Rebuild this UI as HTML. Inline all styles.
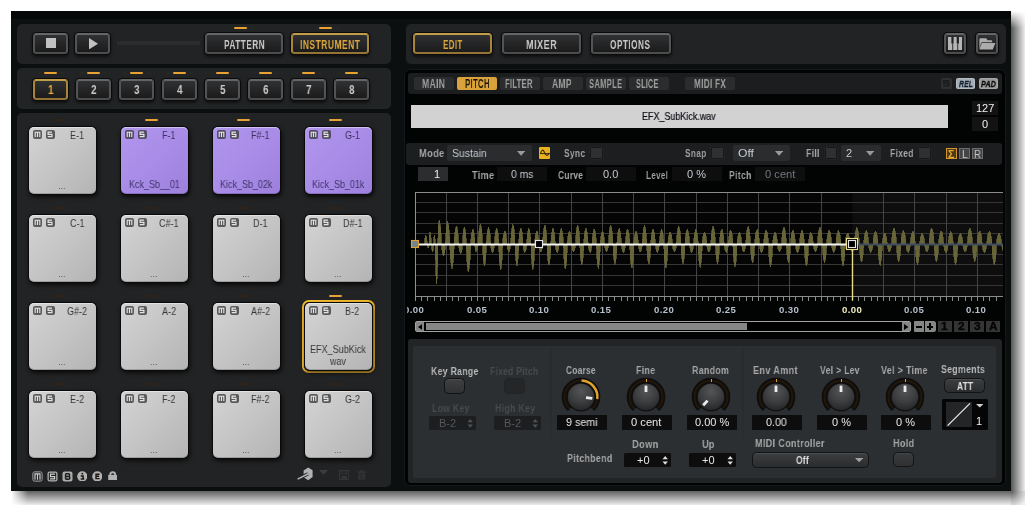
<!DOCTYPE html>
<html><head><meta charset="utf-8"><title>UI</title>
<style>
html,body{margin:0;padding:0;background:#fff;}
body{width:1034px;height:514px;position:relative;overflow:hidden;font-family:"Liberation Sans",sans-serif;}
div,span.t,svg{position:absolute;box-sizing:border-box;}
span.t{white-space:nowrap;transform-origin:0 50%;display:block;will-change:transform;}
.win{background:#0c0f10;}
.pan{background:#222324;border-radius:5px;}
.btn{border-radius:3.5px;border:2px solid #535455;border-top-color:#646566;background:linear-gradient(#303132,#1b1b1c);box-shadow:0 0 0 1px #0b0b0b,0 2px 3px 1px rgba(0,0,0,.55);}
.btn{border-bottom-color:#4b4c4d;}
.btn.on{border-color:#a9853a;border-top-color:#c19c49;border-bottom-color:#937434;}
.pad{border-radius:5px;background:linear-gradient(135deg,#d4d4d4 0%,#c6c6c6 45%,#b4b4b4 100%);box-shadow:0 0 0 1px #0a0a0a,1px 2px 4px 1px rgba(0,0,0,.7),inset 0 1px 0 rgba(255,255,255,.45),inset 0 -1px 0 rgba(0,0,0,.18);}
.pad.pu{background:linear-gradient(135deg,#b196ee 0%,#a88ce7 50%,#9c80dc 100%);}
.ms{background:rgba(58,58,60,.78);border-radius:2px;}
.ind{height:2px;border-radius:1px;background:#2e2316;}
.ind.on{background:#e9a132;}
.tab{background:#2b2c2d;border-radius:2px;}
.tab.on{background:#d9a23a;}
.val{background:#0e0e0e;}
.chk{background:#2f3031;border:1px solid #161718;border-radius:1.5px;box-shadow:0 0 0 0.5px rgba(60,62,64,.35);}

</style></head>
<body>
<div style="left:1011.0px;top:11.0px;width:14.0px;height:480.0px;background:linear-gradient(to right,rgba(0,0,0,.66),rgba(0,0,0,.07));-webkit-mask-image:linear-gradient(to bottom,transparent 0,#000 17px);mask-image:linear-gradient(to bottom,transparent 0,#000 17px);"></div>
<div style="left:11.0px;top:491.0px;width:1000.0px;height:14.0px;background:linear-gradient(to bottom,rgba(0,0,0,.62),rgba(0,0,0,.07));-webkit-mask-image:linear-gradient(to right,transparent 0,#000 17px);mask-image:linear-gradient(to right,transparent 0,#000 17px);"></div>
<div style="left:1011.0px;top:491.0px;width:14.0px;height:14.0px;background:radial-gradient(circle at 0 0,rgba(0,0,0,.64) 0,rgba(0,0,0,.3) 9px,rgba(0,0,0,.07) 17px);"></div>
<div class="win" style="left:11.0px;top:11.0px;width:1000.0px;height:480.0px;"></div>
<div style="left:11.0px;top:11.0px;width:1000.0px;height:7.6px;background:#050708;"></div>
<div class="pan" style="left:17.3px;top:24.0px;width:373.7px;height:39.7px;"></div>
<div class="pan" style="left:17.3px;top:68.0px;width:373.7px;height:40.8px;"></div>
<div class="pan" style="left:17.3px;top:113.3px;width:373.7px;height:374.0px;"></div>
<div class="pan" style="left:406.0px;top:24.0px;width:600.2px;height:39.7px;"></div>
<div class="btn" style="left:33.0px;top:32.6px;width:35.0px;height:21.4px;"></div>
<div style="left:46.0px;top:38.0px;width:10.2px;height:10.2px;background:#c2c2c2;"></div>
<div class="btn" style="left:74.8px;top:32.6px;width:35.3px;height:21.4px;"></div>
<svg style="left:88.5px;top:38px" width="9" height="11.4"><polygon points="0,0 9,5.7 0,11.4" fill="#c2c2c2"/></svg>
<div style="left:117.0px;top:41.0px;width:83.0px;height:4.2px;background:#2b2c2d;"></div>
<div class="btn" style="left:204.7px;top:32.6px;width:78.5px;height:21.4px;"></div>
<span class="t" style="left:223.70px;top:35.50px;font-size:13px;line-height:17px;color:#c9c9c9;font-weight:bold;transform:scaleX(0.633);letter-spacing:0.8px;">PATTERN</span>
<div class="btn on" style="left:290.7px;top:32.6px;width:78.6px;height:21.4px;"></div>
<span class="t" style="left:299.80px;top:35.50px;font-size:13px;line-height:17px;color:#dba63c;font-weight:bold;transform:scaleX(0.648);letter-spacing:0.8px;">INSTRUMENT</span>
<div class="ind on" style="left:233.5px;top:27.0px;width:13.6px;height:2.0px;"></div>
<div style="left:250.9px;top:27.2px;width:4.0px;height:1.6px;background:#26291b;border-radius:1px;"></div>
<div class="ind on" style="left:318.7px;top:27.0px;width:13.6px;height:2.0px;"></div>
<div style="left:336.1px;top:27.2px;width:4.0px;height:1.6px;background:#26291b;border-radius:1px;"></div>
<div class="btn on" style="left:33.0px;top:79.0px;width:35.2px;height:21.2px;"></div>
<span class="t" style="left:47.80px;top:81.80px;font-size:12px;line-height:16px;color:#e8ab3a;font-weight:bold;transform:scaleX(0.837);">1</span>
<div class="ind on" style="left:44.0px;top:72.0px;width:13.2px;height:2.0px;"></div>
<div style="left:37.0px;top:72.2px;width:3.8px;height:1.6px;background:#26291b;border-radius:1px;"></div>
<div style="left:60.4px;top:72.2px;width:3.8px;height:1.6px;background:#26291b;border-radius:1px;"></div>
<div class="btn" style="left:76.0px;top:79.0px;width:35.2px;height:21.2px;"></div>
<span class="t" style="left:90.80px;top:81.80px;font-size:12px;line-height:16px;color:#c9c9c9;font-weight:bold;transform:scaleX(0.837);">2</span>
<div class="ind on" style="left:87.0px;top:72.0px;width:13.2px;height:2.0px;"></div>
<div style="left:80.0px;top:72.2px;width:3.8px;height:1.6px;background:#26291b;border-radius:1px;"></div>
<div style="left:103.4px;top:72.2px;width:3.8px;height:1.6px;background:#26291b;border-radius:1px;"></div>
<div class="btn" style="left:119.0px;top:79.0px;width:35.2px;height:21.2px;"></div>
<span class="t" style="left:133.80px;top:81.80px;font-size:12px;line-height:16px;color:#c9c9c9;font-weight:bold;transform:scaleX(0.837);">3</span>
<div class="ind on" style="left:130.0px;top:72.0px;width:13.2px;height:2.0px;"></div>
<div style="left:123.0px;top:72.2px;width:3.8px;height:1.6px;background:#26291b;border-radius:1px;"></div>
<div style="left:146.4px;top:72.2px;width:3.8px;height:1.6px;background:#26291b;border-radius:1px;"></div>
<div class="btn" style="left:162.0px;top:79.0px;width:35.2px;height:21.2px;"></div>
<span class="t" style="left:176.80px;top:81.80px;font-size:12px;line-height:16px;color:#c9c9c9;font-weight:bold;transform:scaleX(0.837);">4</span>
<div class="ind on" style="left:173.0px;top:72.0px;width:13.2px;height:2.0px;"></div>
<div style="left:166.0px;top:72.2px;width:3.8px;height:1.6px;background:#26291b;border-radius:1px;"></div>
<div style="left:189.4px;top:72.2px;width:3.8px;height:1.6px;background:#26291b;border-radius:1px;"></div>
<div class="btn" style="left:204.7px;top:79.0px;width:35.2px;height:21.2px;"></div>
<span class="t" style="left:219.50px;top:81.80px;font-size:12px;line-height:16px;color:#c9c9c9;font-weight:bold;transform:scaleX(0.837);">5</span>
<div class="ind on" style="left:215.7px;top:72.0px;width:13.2px;height:2.0px;"></div>
<div style="left:208.7px;top:72.2px;width:3.8px;height:1.6px;background:#26291b;border-radius:1px;"></div>
<div style="left:232.1px;top:72.2px;width:3.8px;height:1.6px;background:#26291b;border-radius:1px;"></div>
<div class="btn" style="left:247.7px;top:79.0px;width:35.2px;height:21.2px;"></div>
<span class="t" style="left:262.50px;top:81.80px;font-size:12px;line-height:16px;color:#c9c9c9;font-weight:bold;transform:scaleX(0.837);">6</span>
<div class="ind on" style="left:258.7px;top:72.0px;width:13.2px;height:2.0px;"></div>
<div style="left:251.7px;top:72.2px;width:3.8px;height:1.6px;background:#26291b;border-radius:1px;"></div>
<div style="left:275.1px;top:72.2px;width:3.8px;height:1.6px;background:#26291b;border-radius:1px;"></div>
<div class="btn" style="left:290.7px;top:79.0px;width:35.2px;height:21.2px;"></div>
<span class="t" style="left:305.50px;top:81.80px;font-size:12px;line-height:16px;color:#c9c9c9;font-weight:bold;transform:scaleX(0.837);">7</span>
<div class="ind on" style="left:301.7px;top:72.0px;width:13.2px;height:2.0px;"></div>
<div style="left:294.7px;top:72.2px;width:3.8px;height:1.6px;background:#26291b;border-radius:1px;"></div>
<div style="left:318.1px;top:72.2px;width:3.8px;height:1.6px;background:#26291b;border-radius:1px;"></div>
<div class="btn" style="left:333.7px;top:79.0px;width:35.2px;height:21.2px;"></div>
<span class="t" style="left:348.50px;top:81.80px;font-size:12px;line-height:16px;color:#c9c9c9;font-weight:bold;transform:scaleX(0.837);">8</span>
<div class="ind on" style="left:344.7px;top:72.0px;width:13.2px;height:2.0px;"></div>
<div style="left:337.7px;top:72.2px;width:3.8px;height:1.6px;background:#26291b;border-radius:1px;"></div>
<div style="left:361.1px;top:72.2px;width:3.8px;height:1.6px;background:#26291b;border-radius:1px;"></div>
<div class="ind" style="left:53.5px;top:119.0px;width:12.6px;height:2.2px;"></div>
<div class="pad" style="left:29.3px;top:127.0px;width:67.1px;height:66.7px;"></div>
<div class="ms" style="left:33.1px;top:130.2px;width:9.0px;height:8.7px;"></div>
<div class="ms" style="left:46.0px;top:130.2px;width:9.3px;height:8.7px;"></div>
<svg style="left:33.1px;top:130.2px" width="23" height="9" viewBox="0 0 23 9"><path d="M2.2 7V2.2H6.8V7M4.5 2.2V7" stroke="#e4e4e4" stroke-width="1.1" fill="none"/><path d="M19 2.2H15.1V4.4H18.9V6.6H14.8" stroke="#e4e4e4" stroke-width="1.2" fill="none"/></svg>
<span class="t" style="left:69.77px;top:128.50px;font-size:10.4px;line-height:14px;color:#383838;font-weight:normal;transform:scaleX(0.870);">E-1</span>
<span class="t" style="left:57.94px;top:179.60px;font-size:9px;line-height:12px;color:#555;font-weight:normal;">...</span>
<div class="ind on" style="left:145.4px;top:119.0px;width:12.6px;height:2.2px;"></div>
<div class="pad pu" style="left:121.2px;top:127.0px;width:67.1px;height:66.7px;"></div>
<div class="ms" style="left:125.0px;top:130.2px;width:9.0px;height:8.7px;"></div>
<div class="ms" style="left:137.9px;top:130.2px;width:9.3px;height:8.7px;"></div>
<svg style="left:125.0px;top:130.2px" width="23" height="9" viewBox="0 0 23 9"><path d="M2.2 7V2.2H6.8V7M4.5 2.2V7" stroke="#e4e4e4" stroke-width="1.1" fill="none"/><path d="M19 2.2H15.1V4.4H18.9V6.6H14.8" stroke="#e4e4e4" stroke-width="1.2" fill="none"/></svg>
<span class="t" style="left:161.92px;top:128.50px;font-size:10.4px;line-height:14px;color:#40325f;font-weight:normal;transform:scaleX(0.870);">F-1</span>
<span class="t" style="left:128.88px;top:178.30px;font-size:10.2px;line-height:14px;color:#42356a;font-weight:normal;transform:scaleX(0.880);">Kck_Sb__01</span>
<div class="ind on" style="left:237.3px;top:119.0px;width:12.6px;height:2.2px;"></div>
<div class="pad pu" style="left:213.1px;top:127.0px;width:67.1px;height:66.7px;"></div>
<div class="ms" style="left:216.9px;top:130.2px;width:9.0px;height:8.7px;"></div>
<div class="ms" style="left:229.8px;top:130.2px;width:9.3px;height:8.7px;"></div>
<svg style="left:216.9px;top:130.2px" width="23" height="9" viewBox="0 0 23 9"><path d="M2.2 7V2.2H6.8V7M4.5 2.2V7" stroke="#e4e4e4" stroke-width="1.1" fill="none"/><path d="M19 2.2H15.1V4.4H18.9V6.6H14.8" stroke="#e4e4e4" stroke-width="1.2" fill="none"/></svg>
<span class="t" style="left:251.30px;top:128.50px;font-size:10.4px;line-height:14px;color:#40325f;font-weight:normal;transform:scaleX(0.870);">F#-1</span>
<span class="t" style="left:220.03px;top:178.30px;font-size:10.2px;line-height:14px;color:#42356a;font-weight:normal;transform:scaleX(0.880);">Kick_Sb_02k</span>
<div class="ind on" style="left:329.2px;top:119.0px;width:12.6px;height:2.2px;"></div>
<div class="pad pu" style="left:305.0px;top:127.0px;width:67.1px;height:66.7px;"></div>
<div class="ms" style="left:308.8px;top:130.2px;width:9.0px;height:8.7px;"></div>
<div class="ms" style="left:321.7px;top:130.2px;width:9.3px;height:8.7px;"></div>
<svg style="left:308.8px;top:130.2px" width="23" height="9" viewBox="0 0 23 9"><path d="M2.2 7V2.2H6.8V7M4.5 2.2V7" stroke="#e4e4e4" stroke-width="1.1" fill="none"/><path d="M19 2.2H15.1V4.4H18.9V6.6H14.8" stroke="#e4e4e4" stroke-width="1.2" fill="none"/></svg>
<span class="t" style="left:344.96px;top:128.50px;font-size:10.4px;line-height:14px;color:#40325f;font-weight:normal;transform:scaleX(0.870);">G-1</span>
<span class="t" style="left:311.93px;top:178.30px;font-size:10.2px;line-height:14px;color:#42356a;font-weight:normal;transform:scaleX(0.880);">Kick_Sb_01k</span>
<div class="ind" style="left:53.5px;top:207.0px;width:12.6px;height:2.2px;"></div>
<div class="pad" style="left:29.3px;top:215.0px;width:67.1px;height:66.7px;"></div>
<div class="ms" style="left:33.1px;top:218.2px;width:9.0px;height:8.7px;"></div>
<div class="ms" style="left:46.0px;top:218.2px;width:9.3px;height:8.7px;"></div>
<svg style="left:33.1px;top:218.2px" width="23" height="9" viewBox="0 0 23 9"><path d="M2.2 7V2.2H6.8V7M4.5 2.2V7" stroke="#e4e4e4" stroke-width="1.1" fill="none"/><path d="M19 2.2H15.1V4.4H18.9V6.6H14.8" stroke="#e4e4e4" stroke-width="1.2" fill="none"/></svg>
<span class="t" style="left:69.51px;top:216.50px;font-size:10.4px;line-height:14px;color:#383838;font-weight:normal;transform:scaleX(0.870);">C-1</span>
<span class="t" style="left:57.94px;top:267.60px;font-size:9px;line-height:12px;color:#555;font-weight:normal;">...</span>
<div class="ind" style="left:145.4px;top:207.0px;width:12.6px;height:2.2px;"></div>
<div class="pad" style="left:121.2px;top:215.0px;width:67.1px;height:66.7px;"></div>
<div class="ms" style="left:125.0px;top:218.2px;width:9.0px;height:8.7px;"></div>
<div class="ms" style="left:137.9px;top:218.2px;width:9.3px;height:8.7px;"></div>
<svg style="left:125.0px;top:218.2px" width="23" height="9" viewBox="0 0 23 9"><path d="M2.2 7V2.2H6.8V7M4.5 2.2V7" stroke="#e4e4e4" stroke-width="1.1" fill="none"/><path d="M19 2.2H15.1V4.4H18.9V6.6H14.8" stroke="#e4e4e4" stroke-width="1.2" fill="none"/></svg>
<span class="t" style="left:158.90px;top:216.50px;font-size:10.4px;line-height:14px;color:#383838;font-weight:normal;transform:scaleX(0.870);">C#-1</span>
<span class="t" style="left:149.84px;top:267.60px;font-size:9px;line-height:12px;color:#555;font-weight:normal;">...</span>
<div class="ind" style="left:237.3px;top:207.0px;width:12.6px;height:2.2px;"></div>
<div class="pad" style="left:213.1px;top:215.0px;width:67.1px;height:66.7px;"></div>
<div class="ms" style="left:216.9px;top:218.2px;width:9.0px;height:8.7px;"></div>
<div class="ms" style="left:229.8px;top:218.2px;width:9.3px;height:8.7px;"></div>
<svg style="left:216.9px;top:218.2px" width="23" height="9" viewBox="0 0 23 9"><path d="M2.2 7V2.2H6.8V7M4.5 2.2V7" stroke="#e4e4e4" stroke-width="1.1" fill="none"/><path d="M19 2.2H15.1V4.4H18.9V6.6H14.8" stroke="#e4e4e4" stroke-width="1.2" fill="none"/></svg>
<span class="t" style="left:253.31px;top:216.50px;font-size:10.4px;line-height:14px;color:#383838;font-weight:normal;transform:scaleX(0.870);">D-1</span>
<span class="t" style="left:241.74px;top:267.60px;font-size:9px;line-height:12px;color:#555;font-weight:normal;">...</span>
<div class="ind" style="left:329.2px;top:207.0px;width:12.6px;height:2.2px;"></div>
<div class="pad" style="left:305.0px;top:215.0px;width:67.1px;height:66.7px;"></div>
<div class="ms" style="left:308.8px;top:218.2px;width:9.0px;height:8.7px;"></div>
<div class="ms" style="left:321.7px;top:218.2px;width:9.3px;height:8.7px;"></div>
<svg style="left:308.8px;top:218.2px" width="23" height="9" viewBox="0 0 23 9"><path d="M2.2 7V2.2H6.8V7M4.5 2.2V7" stroke="#e4e4e4" stroke-width="1.1" fill="none"/><path d="M19 2.2H15.1V4.4H18.9V6.6H14.8" stroke="#e4e4e4" stroke-width="1.2" fill="none"/></svg>
<span class="t" style="left:342.70px;top:216.50px;font-size:10.4px;line-height:14px;color:#383838;font-weight:normal;transform:scaleX(0.870);">D#-1</span>
<span class="t" style="left:333.64px;top:267.60px;font-size:9px;line-height:12px;color:#555;font-weight:normal;">...</span>
<div class="ind" style="left:53.5px;top:295.0px;width:12.6px;height:2.2px;"></div>
<div class="pad" style="left:29.3px;top:303.0px;width:67.1px;height:66.7px;"></div>
<div class="ms" style="left:33.1px;top:306.2px;width:9.0px;height:8.6px;"></div>
<div class="ms" style="left:46.0px;top:306.2px;width:9.3px;height:8.6px;"></div>
<svg style="left:33.1px;top:306.2px" width="23" height="9" viewBox="0 0 23 9"><path d="M2.2 7V2.2H6.8V7M4.5 2.2V7" stroke="#e4e4e4" stroke-width="1.1" fill="none"/><path d="M19 2.2H15.1V4.4H18.9V6.6H14.8" stroke="#e4e4e4" stroke-width="1.2" fill="none"/></svg>
<span class="t" style="left:66.75px;top:304.50px;font-size:10.4px;line-height:14px;color:#383838;font-weight:normal;transform:scaleX(0.870);">G#-2</span>
<span class="t" style="left:57.94px;top:355.60px;font-size:9px;line-height:12px;color:#555;font-weight:normal;">...</span>
<div class="ind" style="left:145.4px;top:295.0px;width:12.6px;height:2.2px;"></div>
<div class="pad" style="left:121.2px;top:303.0px;width:67.1px;height:66.7px;"></div>
<div class="ms" style="left:125.0px;top:306.2px;width:9.0px;height:8.6px;"></div>
<div class="ms" style="left:137.9px;top:306.2px;width:9.3px;height:8.6px;"></div>
<svg style="left:125.0px;top:306.2px" width="23" height="9" viewBox="0 0 23 9"><path d="M2.2 7V2.2H6.8V7M4.5 2.2V7" stroke="#e4e4e4" stroke-width="1.1" fill="none"/><path d="M19 2.2H15.1V4.4H18.9V6.6H14.8" stroke="#e4e4e4" stroke-width="1.2" fill="none"/></svg>
<span class="t" style="left:161.67px;top:304.50px;font-size:10.4px;line-height:14px;color:#383838;font-weight:normal;transform:scaleX(0.870);">A-2</span>
<span class="t" style="left:149.84px;top:355.60px;font-size:9px;line-height:12px;color:#555;font-weight:normal;">...</span>
<div class="ind" style="left:237.3px;top:295.0px;width:12.6px;height:2.2px;"></div>
<div class="pad" style="left:213.1px;top:303.0px;width:67.1px;height:66.7px;"></div>
<div class="ms" style="left:216.9px;top:306.2px;width:9.0px;height:8.6px;"></div>
<div class="ms" style="left:229.8px;top:306.2px;width:9.3px;height:8.6px;"></div>
<svg style="left:216.9px;top:306.2px" width="23" height="9" viewBox="0 0 23 9"><path d="M2.2 7V2.2H6.8V7M4.5 2.2V7" stroke="#e4e4e4" stroke-width="1.1" fill="none"/><path d="M19 2.2H15.1V4.4H18.9V6.6H14.8" stroke="#e4e4e4" stroke-width="1.2" fill="none"/></svg>
<span class="t" style="left:251.05px;top:304.50px;font-size:10.4px;line-height:14px;color:#383838;font-weight:normal;transform:scaleX(0.870);">A#-2</span>
<span class="t" style="left:241.74px;top:355.60px;font-size:9px;line-height:12px;color:#555;font-weight:normal;">...</span>
<div class="ind on" style="left:329.2px;top:295.0px;width:12.6px;height:2.2px;"></div>
<div style="left:302.1px;top:299.9px;width:72.9px;height:73.0px;border:2.1px solid #f8bd30;border-radius:7px;background:#1a1a1a;"></div>
<div class="pad" style="left:305.0px;top:303.0px;width:67.1px;height:66.7px;"></div>
<div class="ms" style="left:308.8px;top:306.2px;width:9.0px;height:8.6px;"></div>
<div class="ms" style="left:321.7px;top:306.2px;width:9.3px;height:8.6px;"></div>
<svg style="left:308.8px;top:306.2px" width="23" height="9" viewBox="0 0 23 9"><path d="M2.2 7V2.2H6.8V7M4.5 2.2V7" stroke="#e4e4e4" stroke-width="1.1" fill="none"/><path d="M19 2.2H15.1V4.4H18.9V6.6H14.8" stroke="#e4e4e4" stroke-width="1.2" fill="none"/></svg>
<span class="t" style="left:345.47px;top:304.50px;font-size:10.4px;line-height:14px;color:#383838;font-weight:normal;transform:scaleX(0.870);">B-2</span>
<span class="t" style="left:310.30px;top:343.20px;font-size:10.2px;line-height:14px;color:#383838;font-weight:normal;transform:scaleX(0.889);">EFX_SubKick</span>
<span class="t" style="left:330.42px;top:354.50px;font-size:10.2px;line-height:14px;color:#383838;font-weight:normal;transform:scaleX(0.880);">wav</span>
<div class="ind" style="left:53.5px;top:383.0px;width:12.6px;height:2.2px;"></div>
<div class="pad" style="left:29.3px;top:391.0px;width:67.1px;height:66.7px;"></div>
<div class="ms" style="left:33.1px;top:394.2px;width:9.0px;height:8.6px;"></div>
<div class="ms" style="left:46.0px;top:394.2px;width:9.3px;height:8.6px;"></div>
<svg style="left:33.1px;top:394.2px" width="23" height="9" viewBox="0 0 23 9"><path d="M2.2 7V2.2H6.8V7M4.5 2.2V7" stroke="#e4e4e4" stroke-width="1.1" fill="none"/><path d="M19 2.2H15.1V4.4H18.9V6.6H14.8" stroke="#e4e4e4" stroke-width="1.2" fill="none"/></svg>
<span class="t" style="left:69.77px;top:392.50px;font-size:10.4px;line-height:14px;color:#383838;font-weight:normal;transform:scaleX(0.870);">E-2</span>
<span class="t" style="left:57.94px;top:443.60px;font-size:9px;line-height:12px;color:#555;font-weight:normal;">...</span>
<div class="ind" style="left:145.4px;top:383.0px;width:12.6px;height:2.2px;"></div>
<div class="pad" style="left:121.2px;top:391.0px;width:67.1px;height:66.7px;"></div>
<div class="ms" style="left:125.0px;top:394.2px;width:9.0px;height:8.6px;"></div>
<div class="ms" style="left:137.9px;top:394.2px;width:9.3px;height:8.6px;"></div>
<svg style="left:125.0px;top:394.2px" width="23" height="9" viewBox="0 0 23 9"><path d="M2.2 7V2.2H6.8V7M4.5 2.2V7" stroke="#e4e4e4" stroke-width="1.1" fill="none"/><path d="M19 2.2H15.1V4.4H18.9V6.6H14.8" stroke="#e4e4e4" stroke-width="1.2" fill="none"/></svg>
<span class="t" style="left:161.92px;top:392.50px;font-size:10.4px;line-height:14px;color:#383838;font-weight:normal;transform:scaleX(0.870);">F-2</span>
<span class="t" style="left:149.84px;top:443.60px;font-size:9px;line-height:12px;color:#555;font-weight:normal;">...</span>
<div class="ind" style="left:237.3px;top:383.0px;width:12.6px;height:2.2px;"></div>
<div class="pad" style="left:213.1px;top:391.0px;width:67.1px;height:66.7px;"></div>
<div class="ms" style="left:216.9px;top:394.2px;width:9.0px;height:8.6px;"></div>
<div class="ms" style="left:229.8px;top:394.2px;width:9.3px;height:8.6px;"></div>
<svg style="left:216.9px;top:394.2px" width="23" height="9" viewBox="0 0 23 9"><path d="M2.2 7V2.2H6.8V7M4.5 2.2V7" stroke="#e4e4e4" stroke-width="1.1" fill="none"/><path d="M19 2.2H15.1V4.4H18.9V6.6H14.8" stroke="#e4e4e4" stroke-width="1.2" fill="none"/></svg>
<span class="t" style="left:251.30px;top:392.50px;font-size:10.4px;line-height:14px;color:#383838;font-weight:normal;transform:scaleX(0.870);">F#-2</span>
<span class="t" style="left:241.74px;top:443.60px;font-size:9px;line-height:12px;color:#555;font-weight:normal;">...</span>
<div class="ind" style="left:329.2px;top:383.0px;width:12.6px;height:2.2px;"></div>
<div class="pad" style="left:305.0px;top:391.0px;width:67.1px;height:66.7px;"></div>
<div class="ms" style="left:308.8px;top:394.2px;width:9.0px;height:8.6px;"></div>
<div class="ms" style="left:321.7px;top:394.2px;width:9.3px;height:8.6px;"></div>
<svg style="left:308.8px;top:394.2px" width="23" height="9" viewBox="0 0 23 9"><path d="M2.2 7V2.2H6.8V7M4.5 2.2V7" stroke="#e4e4e4" stroke-width="1.1" fill="none"/><path d="M19 2.2H15.1V4.4H18.9V6.6H14.8" stroke="#e4e4e4" stroke-width="1.2" fill="none"/></svg>
<span class="t" style="left:344.96px;top:392.50px;font-size:10.4px;line-height:14px;color:#383838;font-weight:normal;transform:scaleX(0.870);">G-2</span>
<span class="t" style="left:333.64px;top:443.60px;font-size:9px;line-height:12px;color:#555;font-weight:normal;">...</span>
<svg style="left:31.6px;top:470.8px" width="11" height="11" viewBox="0 0 11 11"><rect x="0.9" y="0.9" width="9.2" height="9.2" rx="1.6" fill="#1d1e1f" stroke="#a6a6a6" stroke-width="1"/><path d="M3 8.7V2.8H8V8.7M5.5 2.8V8.7" stroke="#d0d0d0" stroke-width="1.15" fill="none"/></svg>
<svg style="left:46.6px;top:470.8px" width="11" height="11" viewBox="0 0 11 11"><rect x="0.5" y="0.5" width="10" height="10" rx="2" fill="#b2b2b2"/><rect x="1.8" y="1.8" width="7.4" height="7.4" fill="#1d1e1f"/><path d="M8 3.2H3.5V5.5H7.6V7.9H3" stroke="#d0d0d0" stroke-width="1.25" fill="none"/></svg>
<svg style="left:61.6px;top:470.8px" width="11" height="11" viewBox="0 0 11 11"><rect x="0.5" y="0.5" width="10" height="10" rx="2" fill="#ababab"/><path d="M3.6 2.8V8.2M3.6 2.8H6.6Q7.6 2.8 7.6 4T6.6 5.4H4M6.6 5.4Q7.8 5.4 7.8 6.8T6.6 8.2H3.6" stroke="#1d1e1f" stroke-width="1.5" fill="none"/></svg>
<svg style="left:76.7px;top:470.8px" width="10.6" height="10.6" viewBox="0 0 10.6 10.6"><circle cx="5.3" cy="5.3" r="5.1" fill="#b2b2b2"/><rect x="4.5" y="1.9" width="1.7" height="1.6" fill="#1c1814"/><path d="M3.7 4.9H6.1V8.1M3.7 8.1H7.3" stroke="#1c1814" stroke-width="1.5" fill="none"/></svg>
<svg style="left:91.7px;top:470.8px" width="10.6" height="10.6" viewBox="0 0 10.6 10.6"><circle cx="5.3" cy="5.3" r="5.1" fill="#b2b2b2"/><path d="M7.6 3.2H4V7.6H7.6M4 5.3H7" stroke="#1c1814" stroke-width="1.4" fill="none"/></svg>
<svg style="left:107.8px;top:470.6px" width="9.4" height="9.6" viewBox="0 0 9.4 9.6"><rect x="0.2" y="3.9" width="9" height="5.4" fill="#b2b2b2"/><path d="M2.3 4.4V3.2Q2.3 1.2 4.7 1.2T7.1 3.2V4.4" stroke="#b2b2b2" stroke-width="1.9" fill="none"/></svg>
<svg style="left:296.5px;top:467.4px" width="17" height="14" viewBox="0 0 17 14"><polygon points="6.6,3.4 11.2,0.6 15.6,3.2 15.6,10 11.2,13.2 6.6,10.2" fill="#b2b2b2"/><path d="M0.8 12L11.6 6.6" stroke="#222324" stroke-width="3.4"/><path d="M0.6 12.2L11.8 6.5" stroke="#b2b2b2" stroke-width="1.5"/><circle cx="11.8" cy="6.5" r="1.5" fill="none" stroke="#b2b2b2" stroke-width="1"/></svg>
<svg style="left:319.3px;top:470.2px" width="9" height="5" viewBox="0 0 9 5"><polygon points="0,0 9,0 4.5,4.8" fill="#3b3c3d"/></svg>
<svg style="left:338.8px;top:470.2px" width="10.4" height="10" viewBox="0 0 10.4 10"><rect x="0.6" y="0.6" width="9.2" height="8.8" fill="none" stroke="#343536" stroke-width="1.2"/><rect x="2.8" y="0.6" width="4.6" height="3.2" fill="none" stroke="#343536" stroke-width="1"/><rect x="2.6" y="6" width="5.2" height="3.4" fill="#343536"/></svg>
<svg style="left:356.8px;top:470px" width="9.4" height="10.4" viewBox="0 0 9.4 10.4"><rect x="0.4" y="1.4" width="8.6" height="1.5" fill="#343536"/><rect x="3" y="0.2" width="3.4" height="1.4" fill="#343536"/><path d="M1.4 3.6H8V9.6H1.4Z" fill="#343536"/><path d="M3.4 4.4V9M4.7 4.4V9M6 4.4V9" stroke="#222324" stroke-width="0.6"/></svg>
<div class="btn on" style="left:413.0px;top:32.6px;width:79.3px;height:21.4px;"></div>
<span class="t" style="left:442.60px;top:35.50px;font-size:13px;line-height:17px;color:#dba63c;font-weight:bold;transform:scaleX(0.603);letter-spacing:0.8px;">EDIT</span>
<div class="btn" style="left:501.7px;top:32.6px;width:79.3px;height:21.4px;"></div>
<span class="t" style="left:525.60px;top:35.50px;font-size:13px;line-height:17px;color:#c9c9c9;font-weight:bold;transform:scaleX(0.691);letter-spacing:0.8px;">MIXER</span>
<div class="btn" style="left:590.8px;top:32.6px;width:79.9px;height:21.4px;"></div>
<span class="t" style="left:610.00px;top:35.50px;font-size:13px;line-height:17px;color:#c9c9c9;font-weight:bold;transform:scaleX(0.630);letter-spacing:0.8px;">OPTIONS</span>
<div class="btn" style="left:943.6px;top:32.6px;width:22.6px;height:21.4px;"></div>
<svg style="left:947.8px;top:37px" width="14.4" height="13.2" viewBox="0 0 14.4 13.2"><rect x="0" y="0" width="14.4" height="13.2" fill="#b6b6b6"/><rect x="3.4" y="0" width="2.2" height="6.6" fill="#1f1f20"/><rect x="8.7" y="0" width="2.2" height="6.6" fill="#1f1f20"/><rect x="4.3" y="6.6" width="0.9" height="6.6" fill="#1f1f20"/><rect x="9.3" y="6.6" width="0.9" height="6.6" fill="#1f1f20"/></svg>
<div class="btn" style="left:975.5px;top:32.6px;width:22.9px;height:21.4px;"></div>
<svg style="left:978.8px;top:37.9px" width="16.8" height="12" viewBox="0 0 16.8 12"><path d="M0.4 11V1.6Q0.4 0.3 1.6 0.3H6.6Q7.6 0.3 8 1.2L8.4 2.2H12.4Q13.2 2.2 13.2 3V4.2H3.4Q2.4 4.2 2 5.2Z" fill="#acacac"/><path d="M2.8 5H16.4L13.8 11.5H0.3Z" fill="#acacac"/></svg>
<div style="left:405.2px;top:69.6px;width:600.1px;height:415.6px;background:#020303;border-radius:5.5px;box-shadow:0 0 0 1px rgba(40,44,46,.35);"></div>
<div style="left:408.0px;top:73.0px;width:594.4px;height:20.6px;background:#1c1d1e;border-radius:3px;"></div>
<div class="tab" style="left:413.6px;top:77.2px;width:40.4px;height:12.7px;"></div>
<span class="t" style="left:422.40px;top:76.00px;font-size:12px;line-height:16px;color:#9d9d9d;font-weight:bold;transform:scaleX(0.719);letter-spacing:0.4px;">MAIN</span>
<div class="tab on" style="left:456.8px;top:77.2px;width:40.4px;height:12.7px;"></div>
<span class="t" style="left:464.60px;top:76.00px;font-size:12px;line-height:16px;color:#1a1407;font-weight:bold;transform:scaleX(0.653);letter-spacing:0.4px;">PITCH</span>
<div class="tab" style="left:499.8px;top:77.2px;width:40.4px;height:12.7px;"></div>
<span class="t" style="left:505.30px;top:76.00px;font-size:12px;line-height:16px;color:#9d9d9d;font-weight:bold;transform:scaleX(0.637);letter-spacing:0.4px;">FILTER</span>
<div class="tab" style="left:543.0px;top:77.2px;width:40.0px;height:12.7px;"></div>
<span class="t" style="left:552.40px;top:76.00px;font-size:12px;line-height:16px;color:#9d9d9d;font-weight:bold;transform:scaleX(0.710);letter-spacing:0.4px;">AMP</span>
<div class="tab" style="left:585.8px;top:77.2px;width:40.6px;height:12.7px;"></div>
<span class="t" style="left:589.40px;top:76.00px;font-size:12px;line-height:16px;color:#9d9d9d;font-weight:bold;transform:scaleX(0.637);letter-spacing:0.4px;">SAMPLE</span>
<div class="tab" style="left:628.8px;top:77.2px;width:40.6px;height:12.7px;"></div>
<span class="t" style="left:636.00px;top:76.00px;font-size:12px;line-height:16px;color:#9d9d9d;font-weight:bold;transform:scaleX(0.605);letter-spacing:0.4px;">SLICE</span>
<div class="tab" style="left:685.0px;top:77.2px;width:50.2px;height:12.7px;"></div>
<span class="t" style="left:693.60px;top:76.00px;font-size:12px;line-height:16px;color:#9d9d9d;font-weight:bold;transform:scaleX(0.684);letter-spacing:0.4px;">MIDI FX</span>
<div style="left:941.3px;top:78.4px;width:10.5px;height:10.5px;background:#2e2f30;border-radius:1.5px;"></div>
<svg style="left:941.3px;top:78.4px" width="10.5" height="10.5" viewBox="0 0 10.5 10.5"><path d="M8.2 2.9H2.8V5.2H7.8V7.6H2.4" stroke="#1b1c1d" stroke-width="1.7" fill="none"/></svg>
<div style="left:956.0px;top:78.4px;width:19.3px;height:10.5px;background:#a6aeb6;border-radius:2.5px;box-shadow:inset 0 0 0 0.6px rgba(220,226,232,.5);"></div>
<span class="t" style="left:958.60px;top:77.40px;font-size:9.6px;line-height:13px;color:#0e1a30;font-weight:bold;font-style:italic;transform:scaleX(0.707);-webkit-text-stroke:0.3px #0e1a30;letter-spacing:0.2px;">REL</span>
<div style="left:979.0px;top:78.4px;width:19.3px;height:10.5px;background:#9c9c9c;border-radius:2.5px;box-shadow:inset 0 0 0 0.6px rgba(200,200,200,.5);"></div>
<span class="t" style="left:981.20px;top:77.40px;font-size:9.6px;line-height:13px;color:#080808;font-weight:bold;font-style:italic;transform:scaleX(0.744);-webkit-text-stroke:0.3px #080808;letter-spacing:0.2px;">PAD</span>
<div style="left:411.0px;top:104.8px;width:537.3px;height:23.0px;background:#d2d2d2;"></div>
<span class="t" style="left:642.30px;top:109.50px;font-size:10.3px;line-height:14px;color:#0c0c14;font-weight:normal;transform:scaleX(0.870);-webkit-text-stroke:0.2px #14141c;">EFX_SubKick.wav</span>
<div style="left:972.0px;top:101.2px;width:26.2px;height:13.8px;background:#131313;"></div>
<span class="t" style="left:976.42px;top:100.80px;font-size:11px;line-height:15px;color:#f2f2f2;font-weight:normal;">127</span>
<div style="left:972.0px;top:117.0px;width:26.2px;height:13.8px;background:#131313;"></div>
<span class="t" style="left:982.34px;top:116.70px;font-size:11px;line-height:15px;color:#f2f2f2;font-weight:normal;">0</span>
<div style="left:406.0px;top:143.2px;width:596.2px;height:21.4px;background:#1d1e1f;border-radius:3px;"></div>
<span class="t" style="left:419.20px;top:145.90px;font-size:11.5px;line-height:15px;color:#a4a4a4;font-weight:bold;transform:scaleX(0.809);letter-spacing:0.4px;">Mode</span>
<div style="left:447.3px;top:145.2px;width:84.9px;height:15.4px;background:#2b2c2e;border-radius:2px;"></div>
<span class="t" style="left:452.40px;top:145.70px;font-size:11px;line-height:15px;color:#c3cad2;font-weight:normal;transform:scaleX(0.948);">Sustain</span>
<svg style="left:517.1px;top:151.2px" width="8.2" height="4.7"><polygon points="0,0 8.2,0 4.1,4.7" fill="#9a9a9a"/></svg>
<div style="left:538.6px;top:147.4px;width:11.9px;height:11.6px;background:#e9b21e;border-radius:1px;"></div>
<svg style="left:538.6px;top:147.4px" width="11.9" height="11.6" viewBox="0 0 11.9 11.6"><path d="M1 6.6H10.9" stroke="#3a2c08" stroke-width="1"/><path d="M1.6 6.4Q3.4 0.6 5.4 5.2T9.2 7.6L10.4 6" stroke="#3a2c08" stroke-width="1.1" fill="none"/></svg>
<span class="t" style="left:564.00px;top:145.90px;font-size:11.5px;line-height:15px;color:#a4a4a4;font-weight:bold;transform:scaleX(0.736);letter-spacing:0.4px;">Sync</span>
<div class="chk" style="left:590.4px;top:146.7px;width:12.8px;height:12.4px;"></div>
<span class="t" style="left:684.80px;top:145.90px;font-size:11.5px;line-height:15px;color:#a4a4a4;font-weight:bold;transform:scaleX(0.727);letter-spacing:0.4px;">Snap</span>
<div class="chk" style="left:711.4px;top:146.7px;width:12.5px;height:12.4px;"></div>
<div style="left:733.0px;top:145.2px;width:57.0px;height:15.4px;background:#2b2c2e;border-radius:2px;"></div>
<span class="t" style="left:738.40px;top:145.70px;font-size:11px;line-height:15px;color:#c3cad2;font-weight:normal;transform:scaleX(1.105);">Off</span>
<svg style="left:774.6px;top:151.2px" width="8.2" height="4.7"><polygon points="0,0 8.2,0 4.1,4.7" fill="#9a9a9a"/></svg>
<span class="t" style="left:805.80px;top:145.90px;font-size:11.5px;line-height:15px;color:#a4a4a4;font-weight:bold;transform:scaleX(0.757);letter-spacing:0.4px;">Fill</span>
<div class="chk" style="left:824.6px;top:146.7px;width:12.7px;height:12.4px;"></div>
<div style="left:840.8px;top:145.2px;width:40.2px;height:15.4px;background:#2b2c2e;border-radius:2px;"></div>
<span class="t" style="left:846.34px;top:145.70px;font-size:11px;line-height:15px;color:#c3cad2;font-weight:normal;">2</span>
<svg style="left:865.7px;top:151.2px" width="8.2" height="4.7"><polygon points="0,0 8.2,0 4.1,4.7" fill="#9a9a9a"/></svg>
<span class="t" style="left:889.80px;top:145.90px;font-size:11.5px;line-height:15px;color:#a4a4a4;font-weight:bold;transform:scaleX(0.743);letter-spacing:0.4px;">Fixed</span>
<div class="chk" style="left:917.8px;top:146.7px;width:13.2px;height:12.4px;"></div>
<div style="left:946.0px;top:148.3px;width:10.8px;height:10.6px;background:#4d3a17;border:1px solid #d3962e;"></div>
<span class="t" style="left:948.10px;top:146.50px;font-size:10.5px;line-height:14px;color:#eaa732;font-weight:bold;transform:scaleX(0.985);letter-spacing:0.4px;">&Sigma;</span>
<div style="left:959.3px;top:148.3px;width:10.5px;height:10.6px;background:#454545;border:1px solid #6b6b6b;"></div>
<span class="t" style="left:961.78px;top:146.70px;font-size:10.5px;line-height:14px;color:#c6c6c6;font-weight:normal;">L</span>
<div style="left:972.4px;top:148.3px;width:10.6px;height:10.6px;background:#454545;border:1px solid #6b6b6b;"></div>
<span class="t" style="left:974.31px;top:146.70px;font-size:10.5px;line-height:14px;color:#c6c6c6;font-weight:normal;transform:scaleX(0.920);">R</span>
<div style="left:418.0px;top:167.0px;width:30.2px;height:13.8px;background:#2c2d2e;"></div>
<span class="t" style="left:433.74px;top:166.50px;font-size:11px;line-height:15px;color:#f0f0f0;font-weight:normal;">1</span>
<span class="t" style="left:471.60px;top:167.70px;font-size:11.5px;line-height:15px;color:#a4a4a4;font-weight:bold;transform:scaleX(0.793);letter-spacing:0.4px;">Time</span>
<div class="val" style="left:497.0px;top:167.0px;width:49.6px;height:13.8px;"></div>
<span class="t" style="left:510.60px;top:166.50px;font-size:11px;line-height:15px;color:#c3cad2;font-weight:normal;transform:scaleX(0.939);">0 ms</span>
<span class="t" style="left:557.80px;top:167.70px;font-size:11.5px;line-height:15px;color:#a4a4a4;font-weight:bold;transform:scaleX(0.728);letter-spacing:0.4px;">Curve</span>
<div class="val" style="left:586.0px;top:167.0px;width:50.0px;height:13.8px;"></div>
<span class="t" style="left:603.00px;top:166.50px;font-size:11px;line-height:15px;color:#c3cad2;font-weight:normal;transform:scaleX(0.981);">0.0</span>
<span class="t" style="left:646.40px;top:167.70px;font-size:11.5px;line-height:15px;color:#a4a4a4;font-weight:bold;transform:scaleX(0.707);letter-spacing:0.4px;">Level</span>
<div class="val" style="left:672.0px;top:167.0px;width:49.6px;height:13.8px;"></div>
<span class="t" style="left:687.00px;top:166.50px;font-size:11px;line-height:15px;color:#c3cad2;font-weight:normal;transform:scaleX(0.991);">0 %</span>
<span class="t" style="left:729.00px;top:167.70px;font-size:11.5px;line-height:15px;color:#a4a4a4;font-weight:bold;transform:scaleX(0.750);letter-spacing:0.4px;">Pitch</span>
<div class="val" style="left:755.0px;top:167.0px;width:50.0px;height:13.8px;"></div>
<span class="t" style="left:765.00px;top:166.50px;font-size:11px;line-height:15px;color:#707680;font-weight:normal;transform:scaleX(1.014);">0 cent</span>
<svg style="left:400px;top:186px" width="610" height="118" viewBox="0 0 610 118"><rect x="15.6" y="6.4" width="436.8" height="103.8" fill="#050505"/><rect x="452.4" y="6.4" width="150.6" height="103.8" fill="#0e0e0e"/><clipPath id="gc"><rect x="15.6" y="6.4" width="587.4" height="103.8"/></clipPath><line x1="15.60" y1="16.50" x2="603.00" y2="16.50" stroke="#363636" stroke-width="1" shape-rendering="crispEdges" /><line x1="15.60" y1="26.50" x2="603.00" y2="26.50" stroke="#363636" stroke-width="1" shape-rendering="crispEdges" /><line x1="15.60" y1="37.50" x2="603.00" y2="37.50" stroke="#363636" stroke-width="1" shape-rendering="crispEdges" /><line x1="15.60" y1="47.50" x2="603.00" y2="47.50" stroke="#363636" stroke-width="1" shape-rendering="crispEdges" /><line x1="15.60" y1="58.50" x2="603.00" y2="58.50" stroke="#363636" stroke-width="1" shape-rendering="crispEdges" /><line x1="15.60" y1="68.50" x2="603.00" y2="68.50" stroke="#363636" stroke-width="1" shape-rendering="crispEdges" /><line x1="15.60" y1="78.50" x2="603.00" y2="78.50" stroke="#363636" stroke-width="1" shape-rendering="crispEdges" /><line x1="15.60" y1="89.50" x2="603.00" y2="89.50" stroke="#363636" stroke-width="1" shape-rendering="crispEdges" /><line x1="15.60" y1="99.50" x2="603.00" y2="99.50" stroke="#363636" stroke-width="1" shape-rendering="crispEdges" /><line x1="46.50" y1="6.40" x2="46.50" y2="110.20" stroke="#444444" stroke-width="1" shape-rendering="crispEdges" /><line x1="77.50" y1="6.40" x2="77.50" y2="110.20" stroke="#444444" stroke-width="1" shape-rendering="crispEdges" /><line x1="108.50" y1="6.40" x2="108.50" y2="110.20" stroke="#444444" stroke-width="1" shape-rendering="crispEdges" /><line x1="139.50" y1="6.40" x2="139.50" y2="110.20" stroke="#444444" stroke-width="1" shape-rendering="crispEdges" /><line x1="171.50" y1="6.40" x2="171.50" y2="110.20" stroke="#444444" stroke-width="1" shape-rendering="crispEdges" /><line x1="202.50" y1="6.40" x2="202.50" y2="110.20" stroke="#444444" stroke-width="1" shape-rendering="crispEdges" /><line x1="233.50" y1="6.40" x2="233.50" y2="110.20" stroke="#444444" stroke-width="1" shape-rendering="crispEdges" /><line x1="264.50" y1="6.40" x2="264.50" y2="110.20" stroke="#444444" stroke-width="1" shape-rendering="crispEdges" /><line x1="296.50" y1="6.40" x2="296.50" y2="110.20" stroke="#444444" stroke-width="1" shape-rendering="crispEdges" /><line x1="327.50" y1="6.40" x2="327.50" y2="110.20" stroke="#444444" stroke-width="1" shape-rendering="crispEdges" /><line x1="358.50" y1="6.40" x2="358.50" y2="110.20" stroke="#444444" stroke-width="1" shape-rendering="crispEdges" /><line x1="389.50" y1="6.40" x2="389.50" y2="110.20" stroke="#444444" stroke-width="1" shape-rendering="crispEdges" /><line x1="421.50" y1="6.40" x2="421.50" y2="110.20" stroke="#444444" stroke-width="1" shape-rendering="crispEdges" /><line x1="483.50" y1="6.40" x2="483.50" y2="110.20" stroke="#444444" stroke-width="1" shape-rendering="crispEdges" /><line x1="514.50" y1="6.40" x2="514.50" y2="110.20" stroke="#444444" stroke-width="1" shape-rendering="crispEdges" /><line x1="546.50" y1="6.40" x2="546.50" y2="110.20" stroke="#444444" stroke-width="1" shape-rendering="crispEdges" /><line x1="577.50" y1="6.40" x2="577.50" y2="110.20" stroke="#444444" stroke-width="1" shape-rendering="crispEdges" /><path d="M24.60 58.00 L24.77 54.83 L25.06 52.02 L25.46 50.08 L25.80 49.20 L26.19 50.08 L26.67 52.02 L27.00 54.83 L27.20 58.00 L27.20 58.00 L27.37 59.58 L27.66 60.99 L28.06 61.96 L28.40 62.40 L28.62 61.96 L28.90 60.99 L29.09 59.58 L29.20 58.00 L29.20 58.00 L29.30 53.57 L29.47 49.64 L29.70 46.93 L29.90 45.70 L30.32 46.93 L30.83 49.64 L31.19 53.57 L31.40 58.00 L31.40 58.00 L31.60 60.84 L31.93 63.37 L32.41 65.11 L32.80 65.90 L33.02 65.11 L33.30 63.37 L33.49 60.84 L33.60 58.00 L33.60 58.00 L33.71 54.83 L33.90 52.02 L34.18 50.08 L34.40 49.20 L34.65 50.08 L34.96 52.02 L35.17 54.83 L35.30 58.00 L35.30 58.00 L35.48 72.51 L35.79 85.40 L36.24 94.27 L36.60 98.30 L36.96 94.27 L37.41 85.40 L37.72 72.51 L37.90 58.00 L37.90 58.00 L38.05 49.18 L38.32 41.34 L38.69 35.95 L39.00 33.50 L39.70 35.95 L40.55 41.34 L41.15 49.18 L41.50 58.00 L41.50 58.00 L41.79 62.43 L42.30 66.36 L43.01 69.07 L43.60 70.30 L44.10 69.07 L44.72 66.36 L45.15 62.43 L45.40 58.00 L45.40 58.00 L45.71 49.79 L46.24 42.50 L46.98 37.48 L47.60 35.20 L48.22 37.48 L48.96 42.50 L49.49 49.79 L49.80 58.00 L49.80 58.00 L50.11 66.82 L50.64 74.66 L51.38 80.05 L52.00 82.50 L52.62 80.05 L53.36 74.66 L53.89 66.82 L54.20 58.00 L54.20 58.00 L54.51 51.38 L55.04 45.49 L55.78 41.44 L56.40 39.60 L57.02 41.44 L57.76 45.49 L58.29 51.38 L58.60 58.00 L58.60 58.00 L58.91 61.46 L59.44 64.53 L60.18 66.64 L60.80 67.60 L61.30 66.64 L61.92 64.53 L62.35 61.46 L62.60 58.00 L62.60 58.00 L62.84 51.70 L63.25 46.10 L63.82 42.25 L64.30 40.50 L64.86 42.25 L65.54 46.10 L66.02 51.70 L66.30 58.00 L66.30 58.00 L66.58 68.08 L67.06 77.04 L67.74 83.20 L68.30 86.00 L68.97 83.20 L69.79 77.04 L70.36 68.08 L70.70 58.00 L70.70 58.00 L71.02 52.64 L71.57 47.87 L72.36 44.59 L73.00 43.10 L73.50 44.59 L74.12 47.87 L74.55 52.64 L74.80 58.00 L74.80 58.00 L75.00 60.84 L75.33 63.37 L75.81 65.11 L76.20 65.90 L76.76 65.11 L77.44 63.37 L77.92 60.84 L78.20 58.00 L78.20 58.00 L78.51 50.80 L79.04 44.40 L79.78 40.00 L80.40 38.00 L81.00 40.00 L81.72 44.40 L82.23 50.80 L82.53 58.00 L82.53 58.00 L82.80 65.92 L83.27 72.96 L83.92 77.80 L84.46 80.00 L85.00 77.80 L85.65 72.96 L86.10 65.92 L86.37 58.00 L86.37 58.00 L86.67 52.03 L87.19 46.71 L87.92 43.06 L88.52 41.40 L89.12 43.06 L89.85 46.71 L90.36 52.03 L90.66 58.00 L90.66 58.00 L90.93 61.10 L91.39 63.85 L92.05 65.74 L92.59 66.60 L93.12 65.74 L93.77 63.85 L94.23 61.10 L94.50 58.00 L94.50 58.00 L94.80 52.24 L95.32 47.12 L96.05 43.60 L96.65 42.00 L97.25 43.60 L97.97 47.12 L98.48 52.24 L98.78 58.00 L98.78 58.00 L99.05 67.36 L99.52 75.68 L100.17 81.40 L100.71 84.00 L101.25 81.40 L101.90 75.68 L102.35 67.36 L102.62 58.00 L102.62 58.00 L102.92 53.18 L103.44 48.89 L104.17 45.94 L104.77 44.60 L105.37 45.94 L106.10 48.89 L106.61 53.18 L106.91 58.00 L106.91 58.00 L107.18 60.88 L107.64 63.44 L108.30 65.20 L108.84 66.00 L109.37 65.20 L110.02 63.44 L110.48 60.88 L110.75 58.00 L110.75 58.00 L111.05 50.91 L111.57 44.60 L112.30 40.27 L112.90 38.30 L113.49 40.27 L114.20 44.60 L114.70 50.91 L114.99 58.00 L114.99 58.00 L115.26 65.80 L115.71 72.74 L116.36 77.51 L116.89 79.67 L117.41 77.51 L118.05 72.74 L118.50 65.80 L118.76 58.00 L118.76 58.00 L119.06 52.11 L119.56 46.88 L120.28 43.28 L120.88 41.65 L121.46 43.28 L122.17 46.88 L122.68 52.11 L122.97 58.00 L122.97 58.00 L123.23 61.10 L123.69 63.85 L124.33 65.74 L124.86 66.60 L125.39 65.74 L126.02 63.85 L126.47 61.10 L126.74 58.00 L126.74 58.00 L127.03 52.33 L127.54 47.28 L128.26 43.81 L128.85 42.24 L129.44 43.81 L130.15 47.28 L130.65 52.33 L130.94 58.00 L130.94 58.00 L131.21 67.22 L131.66 75.42 L132.31 81.05 L132.84 83.62 L133.36 81.05 L134.00 75.42 L134.45 67.22 L134.71 58.00 L134.71 58.00 L135.01 53.25 L135.51 49.02 L136.23 46.12 L136.82 44.80 L137.41 46.12 L138.12 49.02 L138.63 53.25 L138.92 58.00 L138.92 58.00 L139.18 60.88 L139.64 63.44 L140.28 65.20 L140.81 66.00 L141.34 65.20 L141.97 63.44 L142.42 60.88 L142.69 58.00 L142.69 58.00 L142.98 51.01 L143.49 44.80 L144.21 40.52 L144.80 38.58 L145.40 40.52 L146.14 44.80 L146.66 51.01 L146.96 58.00 L146.96 58.00 L147.23 65.69 L147.70 72.52 L148.37 77.22 L148.91 79.36 L149.45 77.22 L150.11 72.52 L150.57 65.69 L150.85 58.00 L150.85 58.00 L151.15 52.20 L151.67 47.04 L152.41 43.50 L153.02 41.88 L153.63 43.50 L154.36 47.04 L154.88 52.20 L155.18 58.00 L155.18 58.00 L155.46 61.10 L155.93 63.85 L156.59 65.74 L157.14 66.60 L157.68 65.74 L158.34 63.85 L158.80 61.10 L159.07 58.00 L159.07 58.00 L159.38 52.41 L159.90 47.44 L160.64 44.02 L161.25 42.47 L161.85 44.02 L162.59 47.44 L163.11 52.41 L163.41 58.00 L163.41 58.00 L163.68 67.09 L164.15 75.16 L164.82 80.72 L165.36 83.24 L165.90 80.72 L166.56 75.16 L167.02 67.09 L167.30 58.00 L167.30 58.00 L167.60 53.32 L168.12 49.15 L168.86 46.29 L169.48 44.99 L170.08 46.29 L170.81 49.15 L171.33 53.32 L171.63 58.00 L171.63 58.00 L171.91 60.88 L172.38 63.44 L173.04 65.20 L173.59 66.00 L174.13 65.20 L174.79 63.44 L175.25 60.88 L175.52 58.00 L175.52 58.00 L175.83 51.12 L176.35 45.00 L177.09 40.79 L177.70 38.88 L178.31 40.79 L179.04 45.00 L179.56 51.12 L179.87 58.00 L179.87 58.00 L180.14 65.57 L180.61 72.30 L181.28 76.93 L181.83 79.03 L182.37 76.93 L183.03 72.30 L183.49 65.57 L183.76 58.00 L183.76 58.00 L184.07 52.29 L184.59 47.21 L185.34 43.72 L185.95 42.13 L186.56 43.72 L187.29 47.21 L187.81 52.29 L188.12 58.00 L188.12 58.00 L188.39 61.10 L188.86 63.85 L189.53 65.74 L190.08 66.60 L190.62 65.74 L191.28 63.85 L191.74 61.10 L192.01 58.00 L192.01 58.00 L192.32 52.49 L192.84 47.60 L193.59 44.23 L194.20 42.70 L194.81 44.23 L195.54 47.60 L196.06 52.49 L196.37 58.00 L196.37 58.00 L196.64 66.95 L197.11 74.90 L197.78 80.37 L198.33 82.86 L198.87 80.37 L199.53 74.90 L199.99 66.95 L200.26 58.00 L200.26 58.00 L200.57 53.39 L201.09 49.29 L201.84 46.47 L202.45 45.19 L203.06 46.47 L203.79 49.29 L204.31 53.39 L204.62 58.00 L204.62 58.00 L204.89 60.88 L205.36 63.44 L206.03 65.20 L206.58 66.00 L207.12 65.20 L207.78 63.44 L208.24 60.88 L208.51 58.00 L208.51 58.00 L208.82 51.22 L209.34 45.20 L210.09 41.06 L210.70 39.18 L211.32 41.06 L212.08 45.20 L212.61 51.22 L212.92 58.00 L212.92 58.00 L213.20 65.45 L213.68 72.08 L214.36 76.64 L214.93 78.71 L215.48 76.64 L216.16 72.08 L216.63 65.45 L216.91 58.00 L216.91 58.00 L217.22 52.38 L217.76 47.38 L218.52 43.94 L219.15 42.38 L219.77 43.94 L220.53 47.38 L221.06 52.38 L221.37 58.00 L221.37 58.00 L221.65 61.10 L222.13 63.85 L222.81 65.74 L223.38 66.60 L223.93 65.74 L224.61 63.85 L225.08 61.10 L225.36 58.00 L225.36 58.00 L225.67 52.58 L226.21 47.76 L226.97 44.45 L227.60 42.94 L228.22 44.45 L228.98 47.76 L229.51 52.58 L229.82 58.00 L229.82 58.00 L230.10 66.81 L230.58 74.64 L231.26 80.02 L231.83 82.47 L232.38 80.02 L233.06 74.64 L233.53 66.81 L233.81 58.00 L233.81 58.00 L234.12 53.46 L234.66 49.42 L235.42 46.65 L236.05 45.39 L236.67 46.65 L237.43 49.42 L237.96 53.46 L238.27 58.00 L238.27 58.00 L238.55 60.88 L239.03 63.44 L239.71 65.20 L240.27 66.00 L240.83 65.20 L241.51 63.44 L241.98 60.88 L242.26 58.00 L242.26 58.00 L242.57 51.33 L243.11 45.41 L243.87 41.33 L244.50 39.48 L245.13 41.33 L245.89 45.41 L246.43 51.33 L246.74 58.00 L246.74 58.00 L247.03 65.33 L247.52 71.85 L248.21 76.33 L248.77 78.37 L249.34 76.33 L250.02 71.85 L250.50 65.33 L250.78 58.00 L250.78 58.00 L251.10 52.47 L251.65 47.55 L252.42 44.17 L253.05 42.63 L253.68 44.17 L254.44 47.55 L254.98 52.47 L255.29 58.00 L255.29 58.00 L255.58 61.10 L256.07 63.85 L256.76 65.74 L257.32 66.60 L257.89 65.74 L258.57 63.85 L259.05 61.10 L259.33 58.00 L259.33 58.00 L259.65 52.67 L260.20 47.93 L260.97 44.67 L261.60 43.18 L262.23 44.67 L262.99 47.93 L263.53 52.67 L263.84 58.00 L263.84 58.00 L264.13 66.67 L264.62 74.37 L265.31 79.67 L265.88 82.08 L266.44 79.67 L267.12 74.37 L267.60 66.67 L267.88 58.00 L267.88 58.00 L268.20 53.53 L268.75 49.56 L269.52 46.83 L270.15 45.59 L270.78 46.83 L271.54 49.56 L272.08 53.53 L272.39 58.00 L272.39 58.00 L272.68 60.88 L273.17 63.44 L273.86 65.20 L274.43 66.00 L274.99 65.20 L275.67 63.44 L276.15 60.88 L276.43 58.00 L276.43 58.00 L276.75 51.44 L277.30 45.62 L278.07 41.61 L278.70 39.79 L279.33 41.61 L280.10 45.62 L280.64 51.44 L280.96 58.00 L280.96 58.00 L281.24 65.21 L281.73 71.62 L282.43 76.03 L283.00 78.03 L283.57 76.03 L284.25 71.62 L284.74 65.21 L285.02 58.00 L285.02 58.00 L285.34 52.56 L285.89 47.72 L286.66 44.40 L287.30 42.88 L287.93 44.40 L288.70 47.72 L289.24 52.56 L289.56 58.00 L289.56 58.00 L289.84 61.10 L290.33 63.85 L291.03 65.74 L291.60 66.60 L292.17 65.74 L292.85 63.85 L293.34 61.10 L293.62 58.00 L293.62 58.00 L293.94 52.76 L294.49 48.09 L295.26 44.89 L295.90 43.43 L296.53 44.89 L297.30 48.09 L297.84 52.76 L298.16 58.00 L298.16 58.00 L298.44 66.52 L298.93 74.10 L299.63 79.31 L300.20 81.68 L300.77 79.31 L301.45 74.10 L301.94 66.52 L302.22 58.00 L302.22 58.00 L302.54 53.61 L303.09 49.70 L303.86 47.02 L304.50 45.80 L305.13 47.02 L305.90 49.70 L306.44 53.61 L306.76 58.00 L306.76 58.00 L307.04 60.88 L307.53 63.44 L308.23 65.20 L308.80 66.00 L309.37 65.20 L310.05 63.44 L310.54 60.88 L310.82 58.00 L310.82 58.00 L311.14 51.56 L311.69 45.83 L312.46 41.89 L313.10 40.10 L313.74 41.89 L314.52 45.83 L315.08 51.56 L315.40 58.00 L315.40 58.00 L315.69 65.09 L316.19 71.39 L316.89 75.72 L317.48 77.69 L318.05 75.72 L318.75 71.39 L319.24 65.09 L319.53 58.00 L319.53 58.00 L319.86 52.65 L320.41 47.90 L321.20 44.63 L321.85 43.14 L322.49 44.63 L323.27 47.90 L323.83 52.65 L324.15 58.00 L324.15 58.00 L324.44 61.10 L324.94 63.85 L325.64 65.74 L326.23 66.60 L326.80 65.74 L327.50 63.85 L327.99 61.10 L328.28 58.00 L328.28 58.00 L328.61 52.84 L329.16 48.26 L329.95 45.11 L330.60 43.68 L331.24 45.11 L332.02 48.26 L332.58 52.84 L332.90 58.00 L332.90 58.00 L333.19 66.38 L333.69 73.83 L334.39 78.95 L334.98 81.27 L335.55 78.95 L336.25 73.83 L336.74 66.38 L337.03 58.00 L337.03 58.00 L337.36 53.68 L337.91 49.84 L338.70 47.21 L339.35 46.01 L339.99 47.21 L340.77 49.84 L341.33 53.68 L341.65 58.00 L341.65 58.00 L341.94 60.88 L342.44 63.44 L343.14 65.20 L343.73 66.00 L344.30 65.20 L345.00 63.44 L345.49 60.88 L345.78 58.00 L345.78 58.00 L346.11 51.67 L346.66 46.04 L347.45 42.17 L348.10 40.41 L348.76 42.17 L349.56 46.04 L350.13 51.67 L350.46 58.00 L350.46 58.00 L350.75 64.96 L351.27 71.16 L351.99 75.41 L352.59 77.35 L353.18 75.41 L353.90 71.16 L354.40 64.96 L354.70 58.00 L354.70 58.00 L355.03 52.74 L355.60 48.07 L356.41 44.86 L357.08 43.40 L357.73 44.86 L358.54 48.07 L359.10 52.74 L359.43 58.00 L359.43 58.00 L359.73 61.10 L360.24 63.85 L360.97 65.74 L361.56 66.60 L362.15 65.74 L362.87 63.85 L363.38 61.10 L363.67 58.00 L363.67 58.00 L364.00 52.93 L364.58 48.43 L365.38 45.34 L366.05 43.93 L366.71 45.34 L367.51 48.43 L368.08 52.93 L368.41 58.00 L368.41 58.00 L368.70 66.23 L369.22 73.55 L369.94 78.58 L370.54 80.86 L371.13 78.58 L371.85 73.55 L372.35 66.23 L372.65 58.00 L372.65 58.00 L372.98 53.76 L373.55 49.99 L374.36 47.39 L375.02 46.22 L375.68 47.39 L376.49 49.99 L377.05 53.76 L377.38 58.00 L377.38 58.00 L377.68 60.88 L378.19 63.44 L378.92 65.20 L379.51 66.00 L380.10 65.20 L380.82 63.44 L381.33 60.88 L381.62 58.00 L381.62 58.00 L381.95 51.78 L382.53 46.26 L383.33 42.46 L384.00 40.74 L384.66 42.46 L385.46 46.26 L386.03 51.78 L386.36 58.00 L386.36 58.00 L386.65 64.84 L387.17 70.91 L387.89 75.09 L388.49 76.99 L389.08 75.09 L389.80 70.91 L390.30 64.84 L390.60 58.00 L390.60 58.00 L390.93 52.84 L391.50 48.26 L392.31 45.10 L392.98 43.67 L393.63 45.10 L394.44 48.26 L395.00 52.84 L395.33 58.00 L395.33 58.00 L395.63 61.10 L396.14 63.85 L396.87 65.74 L397.46 66.60 L398.05 65.74 L398.77 63.85 L399.28 61.10 L399.57 58.00 L399.57 58.00 L399.90 53.03 L400.48 48.61 L401.28 45.57 L401.95 44.19 L402.61 45.57 L403.41 48.61 L403.98 53.03 L404.31 58.00 L404.31 58.00 L404.60 66.08 L405.12 73.26 L405.84 78.20 L406.44 80.44 L407.03 78.20 L407.75 73.26 L408.25 66.08 L408.55 58.00 L408.55 58.00 L408.88 53.84 L409.45 50.13 L410.26 47.59 L410.92 46.43 L411.58 47.59 L412.39 50.13 L412.95 53.84 L413.28 58.00 L413.28 58.00 L413.58 60.88 L414.09 63.44 L414.82 65.20 L415.41 66.00 L416.00 65.20 L416.72 63.44 L417.23 60.88 L417.52 58.00 L417.52 58.00 L417.85 51.90 L418.43 46.48 L419.23 42.75 L419.90 41.06 L420.58 42.75 L421.41 46.48 L421.99 51.90 L422.33 58.00 L422.33 58.00 L422.64 64.71 L423.16 70.67 L423.91 74.77 L424.52 76.63 L425.13 74.77 L425.87 70.67 L426.39 64.71 L426.70 58.00 L426.70 58.00 L427.04 52.94 L427.63 48.44 L428.46 45.35 L429.15 43.94 L429.83 45.35 L430.66 48.44 L431.24 52.94 L431.58 58.00 L431.58 58.00 L431.89 61.10 L432.41 63.85 L433.16 65.74 L433.77 66.60 L434.38 65.74 L435.12 63.85 L435.64 61.10 L435.95 58.00 L435.95 58.00 L436.29 53.12 L436.88 48.78 L437.71 45.80 L438.40 44.45 L439.08 45.80 L439.91 48.78 L440.49 53.12 L440.83 58.00 L440.83 58.00 L441.14 65.93 L441.66 72.98 L442.41 77.82 L443.02 80.02 L443.63 77.82 L444.37 72.98 L444.89 65.93 L445.20 58.00 L445.20 58.00 L445.54 53.91 L446.13 50.28 L446.96 47.78 L447.65 46.65 L448.33 47.78 L449.16 50.28 L449.74 53.91 L450.08 58.00 L450.08 58.00 L450.39 60.88 L450.91 63.44 L451.66 65.20 L452.27 66.00 L452.88 65.20 L453.62 63.44 L454.14 60.88 L454.45 58.00 L454.45 58.00 L454.79 52.02 L455.38 46.71 L456.21 43.05 L456.90 41.39 L457.58 43.05 L458.41 46.71 L458.99 52.02 L459.33 58.00 L459.33 58.00 L459.64 64.58 L460.17 70.42 L460.92 74.44 L461.54 76.27 L462.15 74.44 L462.89 70.42 L463.41 64.58 L463.72 58.00 L463.72 58.00 L464.06 53.04 L464.65 48.63 L465.49 45.59 L466.17 44.22 L466.86 45.59 L467.68 48.63 L468.27 53.04 L468.61 58.00 L468.61 58.00 L468.92 61.10 L469.45 63.85 L470.20 65.74 L470.81 66.60 L471.42 65.74 L472.16 63.85 L472.69 61.10 L472.99 58.00 L472.99 58.00 L473.34 53.22 L473.93 48.97 L474.76 46.04 L475.45 44.71 L476.13 46.04 L476.96 48.97 L477.54 53.22 L477.88 58.00 L477.88 58.00 L478.19 65.77 L478.72 72.68 L479.47 77.43 L480.09 79.59 L480.70 77.43 L481.44 72.68 L481.96 65.77 L482.27 58.00 L482.27 58.00 L482.61 53.99 L483.20 50.43 L484.04 47.99 L484.73 46.87 L485.41 47.99 L486.23 50.43 L486.82 53.99 L487.16 58.00 L487.16 58.00 L487.47 60.88 L488.00 63.44 L488.75 65.20 L489.36 66.00 L489.97 65.20 L490.71 63.44 L491.24 60.88 L491.54 58.00 L491.54 58.00 L491.89 52.14 L492.48 46.93 L493.31 43.35 L494.00 41.73 L494.69 43.35 L495.53 46.93 L496.12 52.14 L496.47 58.00 L496.47 58.00 L496.78 64.44 L497.32 70.17 L498.07 74.11 L498.70 75.90 L499.32 74.11 L500.07 70.17 L500.60 64.44 L500.91 58.00 L500.91 58.00 L501.26 53.14 L501.86 48.81 L502.70 45.84 L503.40 44.49 L504.09 45.84 L504.93 48.81 L505.52 53.14 L505.87 58.00 L505.87 58.00 L506.18 61.10 L506.72 63.85 L507.47 65.74 L508.10 66.60 L508.72 65.74 L509.47 63.85 L510.00 61.10 L510.31 58.00 L510.31 58.00 L510.66 53.31 L511.26 49.15 L512.10 46.28 L512.80 44.98 L513.49 46.28 L514.33 49.15 L514.92 53.31 L515.27 58.00 L515.27 58.00 L515.58 65.62 L516.12 72.39 L516.87 77.04 L517.50 79.16 L518.12 77.04 L518.87 72.39 L519.40 65.62 L519.71 58.00 L519.71 58.00 L520.06 54.07 L520.66 50.59 L521.50 48.19 L522.20 47.10 L522.89 48.19 L523.73 50.59 L524.32 54.07 L524.67 58.00 L524.67 58.00 L524.98 60.88 L525.52 63.44 L526.27 65.20 L526.90 66.00 L527.52 65.20 L528.27 63.44 L528.80 60.88 L529.11 58.00 L529.11 58.00 L529.46 52.24 L530.06 47.12 L530.90 43.60 L531.60 42.00 L532.30 43.60 L533.16 47.12 L533.76 52.24 L534.11 58.00 L534.11 58.00 L534.43 64.34 L534.98 69.97 L535.75 73.84 L536.39 75.60 L537.02 73.84 L537.78 69.97 L538.32 64.34 L538.64 58.00 L538.64 58.00 L538.99 53.22 L539.60 48.97 L540.46 46.05 L541.17 44.72 L541.88 46.05 L542.73 48.97 L543.34 53.22 L543.69 58.00 L543.69 58.00 L544.01 61.10 L544.55 63.85 L545.33 65.74 L545.96 66.60 L546.59 65.74 L547.36 63.85 L547.90 61.10 L548.21 58.00 L548.21 58.00 L548.57 53.39 L549.18 49.30 L550.04 46.48 L550.75 45.20 L551.45 46.48 L552.31 49.30 L552.91 53.39 L553.26 58.00 L553.26 58.00 L553.58 65.49 L554.13 72.14 L554.90 76.72 L555.54 78.80 L556.17 76.72 L556.93 72.14 L557.47 65.49 L557.79 58.00 L557.79 58.00 L558.14 54.14 L558.75 50.71 L559.61 48.35 L560.33 47.28 L561.03 48.35 L561.88 50.71 L562.49 54.14 L562.84 58.00 L562.84 58.00 L563.16 60.88 L563.70 63.44 L564.48 65.20 L565.11 66.00 L565.74 65.20 L566.51 63.44 L567.05 60.88 L567.36 58.00 L567.36 58.00 L567.72 52.24 L568.33 47.12 L569.19 43.60 L569.90 42.00 L570.61 43.60 L571.48 47.12 L572.10 52.24 L572.45 58.00 L572.45 58.00 L572.78 64.34 L573.33 69.97 L574.12 73.84 L574.76 75.60 L575.40 73.84 L576.18 69.97 L576.73 64.34 L577.05 58.00 L577.05 58.00 L577.41 53.22 L578.03 48.97 L578.90 46.05 L579.62 44.72 L580.34 46.05 L581.21 48.97 L581.82 53.22 L582.18 58.00 L582.18 58.00 L582.50 61.10 L583.06 63.85 L583.84 65.74 L584.49 66.60 L585.13 65.74 L585.90 63.85 L586.45 61.10 L586.77 58.00 L586.77 58.00 L587.13 53.39 L587.75 49.30 L588.63 46.48 L589.35 45.20 L590.06 46.48 L590.93 49.30 L591.55 53.39 L591.90 58.00 L591.90 58.00 L592.23 65.49 L592.78 72.14 L593.57 76.72 L594.21 78.80 L594.85 76.72 L595.63 72.14 L596.18 65.49 L596.50 58.00 L596.50 58.00 L596.86 54.14 L597.48 50.71 L598.35 48.35 L599.07 47.28 L599.79 48.35 L600.66 50.71 L601.27 54.14 L601.63 58.00 L601.63 58.00 L601.95 60.88 L602.51 63.44 L603.29 65.20 L603.94 66.00 L604.58 65.20 L605.35 63.44 L605.90 60.88 L606.22 58.00 L606.22 58.00" fill="#6d6b3c" stroke="#6d6b3c" stroke-width="0.7" stroke-linejoin="miter" shape-rendering="crispEdges" clip-path="url(#gc)" opacity="0.95"/><line x1="15.60" y1="6.40" x2="603.00" y2="6.40" stroke="#8c8c8c" stroke-width="1" shape-rendering="crispEdges" /><line x1="15.60" y1="6.40" x2="15.60" y2="114.80" stroke="#909090" stroke-width="1.2" shape-rendering="crispEdges" /><line x1="15.60" y1="110.20" x2="603.00" y2="110.20" stroke="#8c8c8c" stroke-width="1" shape-rendering="crispEdges" /><line x1="21.50" y1="110.20" x2="21.50" y2="114.60" stroke="#8a8a8a" stroke-width="1" shape-rendering="crispEdges" /><line x1="27.50" y1="110.20" x2="27.50" y2="114.60" stroke="#8a8a8a" stroke-width="1" shape-rendering="crispEdges" /><line x1="34.50" y1="110.20" x2="34.50" y2="114.60" stroke="#8a8a8a" stroke-width="1" shape-rendering="crispEdges" /><line x1="40.50" y1="110.20" x2="40.50" y2="114.60" stroke="#8a8a8a" stroke-width="1" shape-rendering="crispEdges" /><line x1="46.50" y1="110.20" x2="46.50" y2="114.60" stroke="#8a8a8a" stroke-width="1" shape-rendering="crispEdges" /><line x1="52.50" y1="110.20" x2="52.50" y2="114.60" stroke="#8a8a8a" stroke-width="1" shape-rendering="crispEdges" /><line x1="58.50" y1="110.20" x2="58.50" y2="114.60" stroke="#8a8a8a" stroke-width="1" shape-rendering="crispEdges" /><line x1="65.50" y1="110.20" x2="65.50" y2="114.60" stroke="#8a8a8a" stroke-width="1" shape-rendering="crispEdges" /><line x1="71.50" y1="110.20" x2="71.50" y2="114.60" stroke="#8a8a8a" stroke-width="1" shape-rendering="crispEdges" /><line x1="77.50" y1="110.20" x2="77.50" y2="114.60" stroke="#8a8a8a" stroke-width="1" shape-rendering="crispEdges" /><line x1="83.50" y1="110.20" x2="83.50" y2="114.60" stroke="#8a8a8a" stroke-width="1" shape-rendering="crispEdges" /><line x1="89.50" y1="110.20" x2="89.50" y2="114.60" stroke="#8a8a8a" stroke-width="1" shape-rendering="crispEdges" /><line x1="96.50" y1="110.20" x2="96.50" y2="114.60" stroke="#8a8a8a" stroke-width="1" shape-rendering="crispEdges" /><line x1="102.50" y1="110.20" x2="102.50" y2="114.60" stroke="#8a8a8a" stroke-width="1" shape-rendering="crispEdges" /><line x1="108.50" y1="110.20" x2="108.50" y2="114.60" stroke="#8a8a8a" stroke-width="1" shape-rendering="crispEdges" /><line x1="114.50" y1="110.20" x2="114.50" y2="114.60" stroke="#8a8a8a" stroke-width="1" shape-rendering="crispEdges" /><line x1="120.50" y1="110.20" x2="120.50" y2="114.60" stroke="#8a8a8a" stroke-width="1" shape-rendering="crispEdges" /><line x1="127.50" y1="110.20" x2="127.50" y2="114.60" stroke="#8a8a8a" stroke-width="1" shape-rendering="crispEdges" /><line x1="133.50" y1="110.20" x2="133.50" y2="114.60" stroke="#8a8a8a" stroke-width="1" shape-rendering="crispEdges" /><line x1="139.50" y1="110.20" x2="139.50" y2="114.60" stroke="#8a8a8a" stroke-width="1" shape-rendering="crispEdges" /><line x1="145.50" y1="110.20" x2="145.50" y2="114.60" stroke="#8a8a8a" stroke-width="1" shape-rendering="crispEdges" /><line x1="152.50" y1="110.20" x2="152.50" y2="114.60" stroke="#8a8a8a" stroke-width="1" shape-rendering="crispEdges" /><line x1="158.50" y1="110.20" x2="158.50" y2="114.60" stroke="#8a8a8a" stroke-width="1" shape-rendering="crispEdges" /><line x1="165.50" y1="110.20" x2="165.50" y2="114.60" stroke="#8a8a8a" stroke-width="1" shape-rendering="crispEdges" /><line x1="171.50" y1="110.20" x2="171.50" y2="114.60" stroke="#8a8a8a" stroke-width="1" shape-rendering="crispEdges" /><line x1="177.50" y1="110.20" x2="177.50" y2="114.60" stroke="#8a8a8a" stroke-width="1" shape-rendering="crispEdges" /><line x1="183.50" y1="110.20" x2="183.50" y2="114.60" stroke="#8a8a8a" stroke-width="1" shape-rendering="crispEdges" /><line x1="190.50" y1="110.20" x2="190.50" y2="114.60" stroke="#8a8a8a" stroke-width="1" shape-rendering="crispEdges" /><line x1="196.50" y1="110.20" x2="196.50" y2="114.60" stroke="#8a8a8a" stroke-width="1" shape-rendering="crispEdges" /><line x1="202.50" y1="110.20" x2="202.50" y2="114.60" stroke="#8a8a8a" stroke-width="1" shape-rendering="crispEdges" /><line x1="208.50" y1="110.20" x2="208.50" y2="114.60" stroke="#8a8a8a" stroke-width="1" shape-rendering="crispEdges" /><line x1="214.50" y1="110.20" x2="214.50" y2="114.60" stroke="#8a8a8a" stroke-width="1" shape-rendering="crispEdges" /><line x1="221.50" y1="110.20" x2="221.50" y2="114.60" stroke="#8a8a8a" stroke-width="1" shape-rendering="crispEdges" /><line x1="227.50" y1="110.20" x2="227.50" y2="114.60" stroke="#8a8a8a" stroke-width="1" shape-rendering="crispEdges" /><line x1="233.50" y1="110.20" x2="233.50" y2="114.60" stroke="#8a8a8a" stroke-width="1" shape-rendering="crispEdges" /><line x1="239.50" y1="110.20" x2="239.50" y2="114.60" stroke="#8a8a8a" stroke-width="1" shape-rendering="crispEdges" /><line x1="245.50" y1="110.20" x2="245.50" y2="114.60" stroke="#8a8a8a" stroke-width="1" shape-rendering="crispEdges" /><line x1="252.50" y1="110.20" x2="252.50" y2="114.60" stroke="#8a8a8a" stroke-width="1" shape-rendering="crispEdges" /><line x1="258.50" y1="110.20" x2="258.50" y2="114.60" stroke="#8a8a8a" stroke-width="1" shape-rendering="crispEdges" /><line x1="264.50" y1="110.20" x2="264.50" y2="114.60" stroke="#8a8a8a" stroke-width="1" shape-rendering="crispEdges" /><line x1="270.50" y1="110.20" x2="270.50" y2="114.60" stroke="#8a8a8a" stroke-width="1" shape-rendering="crispEdges" /><line x1="277.50" y1="110.20" x2="277.50" y2="114.60" stroke="#8a8a8a" stroke-width="1" shape-rendering="crispEdges" /><line x1="283.50" y1="110.20" x2="283.50" y2="114.60" stroke="#8a8a8a" stroke-width="1" shape-rendering="crispEdges" /><line x1="290.50" y1="110.20" x2="290.50" y2="114.60" stroke="#8a8a8a" stroke-width="1" shape-rendering="crispEdges" /><line x1="296.50" y1="110.20" x2="296.50" y2="114.60" stroke="#8a8a8a" stroke-width="1" shape-rendering="crispEdges" /><line x1="302.50" y1="110.20" x2="302.50" y2="114.60" stroke="#8a8a8a" stroke-width="1" shape-rendering="crispEdges" /><line x1="308.50" y1="110.20" x2="308.50" y2="114.60" stroke="#8a8a8a" stroke-width="1" shape-rendering="crispEdges" /><line x1="315.50" y1="110.20" x2="315.50" y2="114.60" stroke="#8a8a8a" stroke-width="1" shape-rendering="crispEdges" /><line x1="321.50" y1="110.20" x2="321.50" y2="114.60" stroke="#8a8a8a" stroke-width="1" shape-rendering="crispEdges" /><line x1="327.50" y1="110.20" x2="327.50" y2="114.60" stroke="#8a8a8a" stroke-width="1" shape-rendering="crispEdges" /><line x1="333.50" y1="110.20" x2="333.50" y2="114.60" stroke="#8a8a8a" stroke-width="1" shape-rendering="crispEdges" /><line x1="339.50" y1="110.20" x2="339.50" y2="114.60" stroke="#8a8a8a" stroke-width="1" shape-rendering="crispEdges" /><line x1="346.50" y1="110.20" x2="346.50" y2="114.60" stroke="#8a8a8a" stroke-width="1" shape-rendering="crispEdges" /><line x1="352.50" y1="110.20" x2="352.50" y2="114.60" stroke="#8a8a8a" stroke-width="1" shape-rendering="crispEdges" /><line x1="358.50" y1="110.20" x2="358.50" y2="114.60" stroke="#8a8a8a" stroke-width="1" shape-rendering="crispEdges" /><line x1="364.50" y1="110.20" x2="364.50" y2="114.60" stroke="#8a8a8a" stroke-width="1" shape-rendering="crispEdges" /><line x1="370.50" y1="110.20" x2="370.50" y2="114.60" stroke="#8a8a8a" stroke-width="1" shape-rendering="crispEdges" /><line x1="377.50" y1="110.20" x2="377.50" y2="114.60" stroke="#8a8a8a" stroke-width="1" shape-rendering="crispEdges" /><line x1="383.50" y1="110.20" x2="383.50" y2="114.60" stroke="#8a8a8a" stroke-width="1" shape-rendering="crispEdges" /><line x1="389.50" y1="110.20" x2="389.50" y2="114.60" stroke="#8a8a8a" stroke-width="1" shape-rendering="crispEdges" /><line x1="395.50" y1="110.20" x2="395.50" y2="114.60" stroke="#8a8a8a" stroke-width="1" shape-rendering="crispEdges" /><line x1="402.50" y1="110.20" x2="402.50" y2="114.60" stroke="#8a8a8a" stroke-width="1" shape-rendering="crispEdges" /><line x1="408.50" y1="110.20" x2="408.50" y2="114.60" stroke="#8a8a8a" stroke-width="1" shape-rendering="crispEdges" /><line x1="415.50" y1="110.20" x2="415.50" y2="114.60" stroke="#8a8a8a" stroke-width="1" shape-rendering="crispEdges" /><line x1="421.50" y1="110.20" x2="421.50" y2="114.60" stroke="#8a8a8a" stroke-width="1" shape-rendering="crispEdges" /><line x1="427.50" y1="110.20" x2="427.50" y2="114.60" stroke="#8a8a8a" stroke-width="1" shape-rendering="crispEdges" /><line x1="433.50" y1="110.20" x2="433.50" y2="114.60" stroke="#8a8a8a" stroke-width="1" shape-rendering="crispEdges" /><line x1="440.50" y1="110.20" x2="440.50" y2="114.60" stroke="#8a8a8a" stroke-width="1" shape-rendering="crispEdges" /><line x1="446.50" y1="110.20" x2="446.50" y2="114.60" stroke="#8a8a8a" stroke-width="1" shape-rendering="crispEdges" /><line x1="458.50" y1="110.20" x2="458.50" y2="114.60" stroke="#8a8a8a" stroke-width="1" shape-rendering="crispEdges" /><line x1="464.50" y1="110.20" x2="464.50" y2="114.60" stroke="#8a8a8a" stroke-width="1" shape-rendering="crispEdges" /><line x1="471.50" y1="110.20" x2="471.50" y2="114.60" stroke="#8a8a8a" stroke-width="1" shape-rendering="crispEdges" /><line x1="477.50" y1="110.20" x2="477.50" y2="114.60" stroke="#8a8a8a" stroke-width="1" shape-rendering="crispEdges" /><line x1="483.50" y1="110.20" x2="483.50" y2="114.60" stroke="#8a8a8a" stroke-width="1" shape-rendering="crispEdges" /><line x1="489.50" y1="110.20" x2="489.50" y2="114.60" stroke="#8a8a8a" stroke-width="1" shape-rendering="crispEdges" /><line x1="495.50" y1="110.20" x2="495.50" y2="114.60" stroke="#8a8a8a" stroke-width="1" shape-rendering="crispEdges" /><line x1="502.50" y1="110.20" x2="502.50" y2="114.60" stroke="#8a8a8a" stroke-width="1" shape-rendering="crispEdges" /><line x1="508.50" y1="110.20" x2="508.50" y2="114.60" stroke="#8a8a8a" stroke-width="1" shape-rendering="crispEdges" /><line x1="514.50" y1="110.20" x2="514.50" y2="114.60" stroke="#8a8a8a" stroke-width="1" shape-rendering="crispEdges" /><line x1="520.50" y1="110.20" x2="520.50" y2="114.60" stroke="#8a8a8a" stroke-width="1" shape-rendering="crispEdges" /><line x1="527.50" y1="110.20" x2="527.50" y2="114.60" stroke="#8a8a8a" stroke-width="1" shape-rendering="crispEdges" /><line x1="533.50" y1="110.20" x2="533.50" y2="114.60" stroke="#8a8a8a" stroke-width="1" shape-rendering="crispEdges" /><line x1="540.50" y1="110.20" x2="540.50" y2="114.60" stroke="#8a8a8a" stroke-width="1" shape-rendering="crispEdges" /><line x1="546.50" y1="110.20" x2="546.50" y2="114.60" stroke="#8a8a8a" stroke-width="1" shape-rendering="crispEdges" /><line x1="552.50" y1="110.20" x2="552.50" y2="114.60" stroke="#8a8a8a" stroke-width="1" shape-rendering="crispEdges" /><line x1="558.50" y1="110.20" x2="558.50" y2="114.60" stroke="#8a8a8a" stroke-width="1" shape-rendering="crispEdges" /><line x1="565.50" y1="110.20" x2="565.50" y2="114.60" stroke="#8a8a8a" stroke-width="1" shape-rendering="crispEdges" /><line x1="571.50" y1="110.20" x2="571.50" y2="114.60" stroke="#8a8a8a" stroke-width="1" shape-rendering="crispEdges" /><line x1="577.50" y1="110.20" x2="577.50" y2="114.60" stroke="#8a8a8a" stroke-width="1" shape-rendering="crispEdges" /><line x1="583.50" y1="110.20" x2="583.50" y2="114.60" stroke="#8a8a8a" stroke-width="1" shape-rendering="crispEdges" /><line x1="589.50" y1="110.20" x2="589.50" y2="114.60" stroke="#8a8a8a" stroke-width="1" shape-rendering="crispEdges" /><line x1="596.50" y1="110.20" x2="596.50" y2="114.60" stroke="#8a8a8a" stroke-width="1" shape-rendering="crispEdges" /><line x1="452.40" y1="58.50" x2="603.00" y2="58.50" stroke="#414d5e" stroke-width="1.9"/><line x1="15.60" y1="58.50" x2="452.40" y2="58.50" stroke="#f4f4f4" stroke-width="2.1"/><line x1="452.5" y1="64" x2="452.5" y2="114.8" stroke="#e6de8c" stroke-width="1.4"/><rect x="11.5" y="54.5" width="7" height="7" fill="#72848c" stroke="#dea032" stroke-width="1.1"/><rect x="135.5" y="54.5" width="7" height="7" fill="#000" stroke="#e4e6ea" stroke-width="1.1"/><rect x="446.5" y="52.5" width="11" height="11" fill="#000" stroke="#e6de8c" stroke-width="1.1"/><rect x="448.5" y="54.5" width="7" height="7" fill="#000" stroke="#e4e6ea" stroke-width="1.1"/></svg>
<div style="left:407.0px;top:304.0px;width:598.0px;height:14.0px;overflow:hidden;"></div>
<div style="left:407px;top:303px;width:30px;height:16px;overflow:hidden;"><span class="t" style="left:-3px;top:0.4px;font-size:9.6px;line-height:13px;color:#b5c0cc;font-weight:bold;letter-spacing:0.4px;transform:scaleX(1.0);">0.00</span></div>
<span class="t" style="left:466.80px;top:303.40px;font-size:9.6px;line-height:13px;color:#b5c0cc;font-weight:bold;letter-spacing:0.4px;">0.05</span>
<span class="t" style="left:529.10px;top:303.40px;font-size:9.6px;line-height:13px;color:#b5c0cc;font-weight:bold;letter-spacing:0.4px;">0.10</span>
<span class="t" style="left:591.40px;top:303.40px;font-size:9.6px;line-height:13px;color:#b5c0cc;font-weight:bold;letter-spacing:0.4px;">0.15</span>
<span class="t" style="left:653.70px;top:303.40px;font-size:9.6px;line-height:13px;color:#b5c0cc;font-weight:bold;letter-spacing:0.4px;">0.20</span>
<span class="t" style="left:716.00px;top:303.40px;font-size:9.6px;line-height:13px;color:#b5c0cc;font-weight:bold;letter-spacing:0.4px;">0.25</span>
<span class="t" style="left:778.50px;top:303.40px;font-size:9.6px;line-height:13px;color:#b5c0cc;font-weight:bold;letter-spacing:0.4px;">0.30</span>
<span class="t" style="left:841.80px;top:303.40px;font-size:9.6px;line-height:13px;color:#f3efc6;font-weight:bold;letter-spacing:0.4px;">0.00</span>
<span class="t" style="left:903.50px;top:303.40px;font-size:9.6px;line-height:13px;color:#b5c0cc;font-weight:bold;letter-spacing:0.4px;">0.05</span>
<span class="t" style="left:966.30px;top:303.40px;font-size:9.6px;line-height:13px;color:#b5c0cc;font-weight:bold;letter-spacing:0.4px;">0.10</span>
<div style="left:415.0px;top:321.4px;width:496.2px;height:10.4px;background:#000;border:1px solid #a2a2a2;border-radius:2px;"></div>
<div style="left:416.0px;top:322.4px;width:8.4px;height:8.4px;background:#858585;"></div>
<svg style="left:417.6px;top:323.6px" width="4.4" height="6"><polygon points="4.4,0 4.4,6 0,3" fill="#000"/></svg>
<div style="left:425.8px;top:323.3px;width:321.4px;height:6.6px;background:#868686;"></div>
<div style="left:901.8px;top:322.4px;width:8.4px;height:8.4px;background:#858585;"></div>
<svg style="left:904.2px;top:323.6px" width="4.4" height="6"><polygon points="0,0 0,6 4.4,3" fill="#000"/></svg>
<div style="left:913.9px;top:321.2px;width:10.5px;height:10.5px;background:#868686;border-radius:1px 0 0 1px;"></div>
<div style="left:916.0px;top:325.5px;width:6.2px;height:2.0px;background:#000;"></div>
<div style="left:925.0px;top:321.2px;width:10.5px;height:10.5px;background:#868686;border-radius:0 2.5px 2.5px 0;"></div>
<div style="left:927.2px;top:325.5px;width:6.2px;height:2.0px;background:#000;"></div>
<div style="left:929.3px;top:323.4px;width:2.0px;height:6.2px;background:#000;"></div>
<div style="left:938.0px;top:321.2px;width:13.5px;height:10.5px;background:#343434;"></div>
<span class="t" style="left:941.44px;top:319.20px;font-size:11px;line-height:15px;color:#050505;font-weight:bold;transform:scaleX(1.080);-webkit-text-stroke:0.3px #050505;">1</span>
<div style="left:954.3px;top:321.2px;width:13.4px;height:10.5px;background:#343434;"></div>
<span class="t" style="left:957.69px;top:319.20px;font-size:11px;line-height:15px;color:#050505;font-weight:bold;transform:scaleX(1.080);-webkit-text-stroke:0.3px #050505;">2</span>
<div style="left:970.3px;top:321.2px;width:13.5px;height:10.5px;background:#343434;"></div>
<span class="t" style="left:973.74px;top:319.20px;font-size:11px;line-height:15px;color:#050505;font-weight:bold;transform:scaleX(1.080);-webkit-text-stroke:0.3px #050505;">3</span>
<div style="left:986.1px;top:321.2px;width:13.7px;height:10.5px;background:#343434;"></div>
<span class="t" style="left:988.66px;top:319.20px;font-size:11px;line-height:15px;color:#050505;font-weight:bold;transform:scaleX(1.080);-webkit-text-stroke:0.3px #050505;">A</span>
<div style="left:408.1px;top:339.4px;width:594.1px;height:143.4px;background:#232425;border-radius:3px;"></div>
<div style="left:413.2px;top:346.0px;width:582.6px;height:131.8px;background:#2c2f32;border-radius:2px;"></div>
<div style="left:549.8px;top:348.6px;width:2.0px;height:127.4px;background:linear-gradient(#2a2b2c 0%,#2a2b2c 55%,rgba(42,43,44,0) 90%);"></div>
<div style="left:742.0px;top:348.6px;width:2.2px;height:127.4px;background:linear-gradient(#2a2b2c 0%,#2a2b2c 55%,rgba(42,43,44,0) 90%);"></div>
<span class="t" style="left:430.80px;top:363.70px;font-size:11.5px;line-height:15px;color:#b8b8b8;font-weight:bold;transform:scaleX(0.755);letter-spacing:0.4px;">Key Range</span>
<div style="left:444.2px;top:378.2px;width:20.6px;height:16.0px;background:linear-gradient(#404142,#303132);border:1.6px solid #131314;border-radius:4.5px;box-shadow:inset 0 1px 0 rgba(255,255,255,.08);"></div>
<span class="t" style="left:490.00px;top:363.70px;font-size:11.5px;line-height:15px;color:#484a4c;font-weight:bold;transform:scaleX(0.736);letter-spacing:0.4px;">Fixed Pitch</span>
<div style="left:504.2px;top:378.2px;width:20.8px;height:16.0px;background:#252627;border:1.6px solid #222324;border-radius:4.5px;"></div>
<span class="t" style="left:432.00px;top:401.10px;font-size:11.5px;line-height:15px;color:#484a4c;font-weight:bold;transform:scaleX(0.751);letter-spacing:0.4px;">Low Key</span>
<span class="t" style="left:495.20px;top:401.10px;font-size:11.5px;line-height:15px;color:#484a4c;font-weight:bold;transform:scaleX(0.762);letter-spacing:0.4px;">High Key</span>
<div style="left:429.0px;top:416.2px;width:47.0px;height:13.8px;background:#1d1e1f;border-radius:1.5px;"></div>
<span class="t" style="left:439.04px;top:415.90px;font-size:11px;line-height:15px;color:#54575b;font-weight:normal;">B-2</span>
<svg style="left:466.9px;top:417.7px" width="6.4" height="10.8" viewBox="0 0 6.4 10.8"><polygon points="0.5,4.3 5.9,4.3 3.2,1" fill="#505356"/><polygon points="0.5,6.5 5.9,6.5 3.2,9.8" fill="#505356"/></svg>
<div style="left:494.0px;top:416.2px;width:47.2px;height:13.8px;background:#1d1e1f;border-radius:1.5px;"></div>
<span class="t" style="left:504.24px;top:415.90px;font-size:11px;line-height:15px;color:#54575b;font-weight:normal;">B-2</span>
<svg style="left:532.1px;top:417.7px" width="6.4" height="10.8" viewBox="0 0 6.4 10.8"><polygon points="0.5,4.3 5.9,4.3 3.2,1" fill="#505356"/><polygon points="0.5,6.5 5.9,6.5 3.2,9.8" fill="#505356"/></svg>
<svg style="left:559.8px;top:375.8px" width="42" height="42" viewBox="0 0 42 42"><path d="M9.82 32.99A16.4 16.4 0 1 1 32.18 32.99" fill="none" stroke="#0e0d0c" stroke-width="5.8"/><path d="M9.82 32.99A16.4 16.4 0 1 1 32.18 32.99" fill="none" stroke="#21160a" stroke-width="2.1"/><path d="M21.57 4.61A16.4 16.4 0 0 1 37.28 23.00" fill="none" stroke="#e0a42e" stroke-width="2.5"/><defs><radialGradient id="kg580" cx="50%" cy="28%" r="75%"><stop offset="0" stop-color="#545556"/><stop offset="0.6" stop-color="#3a3b3c"/><stop offset="1" stop-color="#232425"/></radialGradient></defs><circle cx="21" cy="21.6" r="14" fill="#101011"/><circle cx="21" cy="21" r="13.2" fill="url(#kg580)"/><path d="M25.96 21.61L32.32 22.39" stroke="#ececec" stroke-width="2.8"/></svg>
<svg style="left:624.8px;top:375.8px" width="42" height="42" viewBox="0 0 42 42"><path d="M9.82 32.99A16.4 16.4 0 1 1 32.18 32.99" fill="none" stroke="#0e0d0c" stroke-width="5.8"/><path d="M9.82 32.99A16.4 16.4 0 1 1 32.18 32.99" fill="none" stroke="#21160a" stroke-width="2.1"/><path d="M21.00 5.90L21.00 3.10" stroke="#d89c30" stroke-width="1" shape-rendering="crispEdges"/><defs><radialGradient id="kg645" cx="50%" cy="28%" r="75%"><stop offset="0" stop-color="#545556"/><stop offset="0.6" stop-color="#3a3b3c"/><stop offset="1" stop-color="#232425"/></radialGradient></defs><circle cx="21" cy="21.6" r="14" fill="#101011"/><circle cx="21" cy="21" r="13.2" fill="url(#kg645)"/><path d="M21.00 16.00L21.00 9.60" stroke="#ececec" stroke-width="2.8"/></svg>
<svg style="left:689.6px;top:375.8px" width="42" height="42" viewBox="0 0 42 42"><path d="M9.82 32.99A16.4 16.4 0 1 1 32.18 32.99" fill="none" stroke="#0e0d0c" stroke-width="5.8"/><path d="M9.82 32.99A16.4 16.4 0 1 1 32.18 32.99" fill="none" stroke="#21160a" stroke-width="2.1"/><path d="M21.00 5.90L21.00 3.10" stroke="#d89c30" stroke-width="1" shape-rendering="crispEdges"/><defs><radialGradient id="kg710" cx="50%" cy="28%" r="75%"><stop offset="0" stop-color="#545556"/><stop offset="0.6" stop-color="#3a3b3c"/><stop offset="1" stop-color="#232425"/></radialGradient></defs><circle cx="21" cy="21.6" r="14" fill="#101011"/><circle cx="21" cy="21" r="13.2" fill="url(#kg710)"/><path d="M17.58 24.65L13.21 29.32" stroke="#ececec" stroke-width="2.8"/></svg>
<svg style="left:754.7px;top:375.8px" width="42" height="42" viewBox="0 0 42 42"><path d="M9.82 32.99A16.4 16.4 0 1 1 32.18 32.99" fill="none" stroke="#0e0d0c" stroke-width="5.8"/><path d="M9.82 32.99A16.4 16.4 0 1 1 32.18 32.99" fill="none" stroke="#21160a" stroke-width="2.1"/><path d="M21.00 5.90L21.00 3.10" stroke="#d89c30" stroke-width="1" shape-rendering="crispEdges"/><defs><radialGradient id="kg775" cx="50%" cy="28%" r="75%"><stop offset="0" stop-color="#545556"/><stop offset="0.6" stop-color="#3a3b3c"/><stop offset="1" stop-color="#232425"/></radialGradient></defs><circle cx="21" cy="21.6" r="14" fill="#101011"/><circle cx="21" cy="21" r="13.2" fill="url(#kg775)"/><path d="M21.00 16.00L21.00 9.60" stroke="#ececec" stroke-width="2.8"/></svg>
<svg style="left:819.7px;top:375.8px" width="42" height="42" viewBox="0 0 42 42"><path d="M9.82 32.99A16.4 16.4 0 1 1 32.18 32.99" fill="none" stroke="#0e0d0c" stroke-width="5.8"/><path d="M9.82 32.99A16.4 16.4 0 1 1 32.18 32.99" fill="none" stroke="#21160a" stroke-width="2.1"/><path d="M21.00 5.90L21.00 3.10" stroke="#d89c30" stroke-width="1" shape-rendering="crispEdges"/><defs><radialGradient id="kg840" cx="50%" cy="28%" r="75%"><stop offset="0" stop-color="#545556"/><stop offset="0.6" stop-color="#3a3b3c"/><stop offset="1" stop-color="#232425"/></radialGradient></defs><circle cx="21" cy="21.6" r="14" fill="#101011"/><circle cx="21" cy="21" r="13.2" fill="url(#kg840)"/><path d="M21.00 16.00L21.00 9.60" stroke="#ececec" stroke-width="2.8"/></svg>
<svg style="left:884.2px;top:375.8px" width="42" height="42" viewBox="0 0 42 42"><path d="M9.82 32.99A16.4 16.4 0 1 1 32.18 32.99" fill="none" stroke="#0e0d0c" stroke-width="5.8"/><path d="M9.82 32.99A16.4 16.4 0 1 1 32.18 32.99" fill="none" stroke="#21160a" stroke-width="2.1"/><path d="M21.00 5.90L21.00 3.10" stroke="#d89c30" stroke-width="1" shape-rendering="crispEdges"/><defs><radialGradient id="kg905" cx="50%" cy="28%" r="75%"><stop offset="0" stop-color="#545556"/><stop offset="0.6" stop-color="#3a3b3c"/><stop offset="1" stop-color="#232425"/></radialGradient></defs><circle cx="21" cy="21.6" r="14" fill="#101011"/><circle cx="21" cy="21" r="13.2" fill="url(#kg905)"/><path d="M21.00 16.00L21.00 9.60" stroke="#ececec" stroke-width="2.8"/></svg>
<span class="t" style="left:566.00px;top:362.70px;font-size:11.5px;line-height:15px;color:#a6a6a6;font-weight:bold;transform:scaleX(0.720);letter-spacing:0.4px;">Coarse</span>
<div style="left:556.8px;top:415.2px;width:50.4px;height:15.0px;background:#0d0d0d;"></div>
<span class="t" style="left:565.80px;top:415.40px;font-size:11px;line-height:15px;color:#e8e8e8;font-weight:normal;transform:scaleX(0.975);">9 semi</span>
<span class="t" style="left:636.00px;top:362.70px;font-size:11.5px;line-height:15px;color:#a6a6a6;font-weight:bold;transform:scaleX(0.768);letter-spacing:0.4px;">Fine</span>
<div style="left:621.9px;top:415.2px;width:50.1px;height:15.0px;background:#0d0d0d;"></div>
<span class="t" style="left:631.35px;top:415.40px;font-size:11px;line-height:15px;color:#e8e8e8;font-weight:normal;transform:scaleX(1.014);">0 cent</span>
<span class="t" style="left:692.20px;top:362.70px;font-size:11.5px;line-height:15px;color:#a6a6a6;font-weight:bold;transform:scaleX(0.768);letter-spacing:0.4px;">Random</span>
<div style="left:687.0px;top:415.2px;width:50.0px;height:15.0px;background:#0d0d0d;"></div>
<span class="t" style="left:694.60px;top:415.40px;font-size:11px;line-height:15px;color:#e8e8e8;font-weight:normal;transform:scaleX(0.993);">0.00 %</span>
<span class="t" style="left:753.20px;top:362.70px;font-size:11.5px;line-height:15px;color:#a6a6a6;font-weight:bold;transform:scaleX(0.794);letter-spacing:0.4px;">Env Amnt</span>
<div style="left:752.3px;top:415.2px;width:49.9px;height:15.0px;background:#0d0d0d;"></div>
<span class="t" style="left:766.45px;top:415.40px;font-size:11px;line-height:15px;color:#e8e8e8;font-weight:normal;transform:scaleX(0.971);">0.00</span>
<span class="t" style="left:820.20px;top:362.70px;font-size:11.5px;line-height:15px;color:#a6a6a6;font-weight:bold;transform:scaleX(0.749);letter-spacing:0.4px;">Vel &gt; Lev</span>
<div style="left:817.0px;top:415.2px;width:50.0px;height:15.0px;background:#0d0d0d;"></div>
<span class="t" style="left:832.20px;top:415.40px;font-size:11px;line-height:15px;color:#e8e8e8;font-weight:normal;transform:scaleX(0.991);">0 %</span>
<span class="t" style="left:881.40px;top:362.70px;font-size:11.5px;line-height:15px;color:#a6a6a6;font-weight:bold;transform:scaleX(0.775);letter-spacing:0.4px;">Vel &gt; Time</span>
<div style="left:881.0px;top:415.2px;width:50.0px;height:15.0px;background:#0d0d0d;"></div>
<span class="t" style="left:896.20px;top:415.40px;font-size:11px;line-height:15px;color:#e8e8e8;font-weight:normal;transform:scaleX(0.991);">0 %</span>
<span class="t" style="left:567.00px;top:451.30px;font-size:11.5px;line-height:15px;color:#a6a6a6;font-weight:bold;transform:scaleX(0.770);letter-spacing:0.4px;">Pitchbend</span>
<span class="t" style="left:632.00px;top:436.90px;font-size:11.5px;line-height:15px;color:#a6a6a6;font-weight:bold;transform:scaleX(0.808);letter-spacing:0.4px;">Down</span>
<span class="t" style="left:702.00px;top:436.90px;font-size:11.5px;line-height:15px;color:#a6a6a6;font-weight:bold;transform:scaleX(0.808);">Up</span>
<div style="left:624.0px;top:453.0px;width:47.2px;height:13.8px;background:#0d0d0d;border-radius:1.5px;"></div>
<span class="t" style="left:636.73px;top:452.70px;font-size:11px;line-height:15px;color:#e8e8e8;font-weight:normal;">+0</span>
<svg style="left:662.1px;top:454.5px" width="6.4" height="10.8" viewBox="0 0 6.4 10.8"><polygon points="0.5,4.3 5.9,4.3 3.2,1" fill="#e0e0e0"/><polygon points="0.5,6.5 5.9,6.5 3.2,9.8" fill="#e0e0e0"/></svg>
<div style="left:689.0px;top:453.0px;width:47.0px;height:13.8px;background:#0d0d0d;border-radius:1.5px;"></div>
<span class="t" style="left:701.73px;top:452.70px;font-size:11px;line-height:15px;color:#e8e8e8;font-weight:normal;">+0</span>
<svg style="left:726.9px;top:454.5px" width="6.4" height="10.8" viewBox="0 0 6.4 10.8"><polygon points="0.5,4.3 5.9,4.3 3.2,1" fill="#e0e0e0"/><polygon points="0.5,6.5 5.9,6.5 3.2,9.8" fill="#e0e0e0"/></svg>
<span class="t" style="left:755.00px;top:436.30px;font-size:11.5px;line-height:15px;color:#a6a6a6;font-weight:bold;transform:scaleX(0.789);letter-spacing:0.4px;">MIDI Controller</span>
<div style="left:752.2px;top:452.4px;width:116.6px;height:15.6px;border-radius:4.5px;border:1.6px solid #131314;background:linear-gradient(#3d3e3f,#2b2c2d);box-shadow:inset 0 1px 0 rgba(255,255,255,.08);"></div>
<span class="t" style="left:796.40px;top:453.20px;font-size:10.5px;line-height:14px;color:#dedede;font-weight:bold;transform:scaleX(0.794);letter-spacing:0.4px;">Off</span>
<svg style="left:854.9px;top:458.1px" width="8.2" height="4.3"><polygon points="0,0 8.2,0 4.1,4.3" fill="#a2a2a2"/></svg>
<span class="t" style="left:893.00px;top:436.30px;font-size:11.5px;line-height:15px;color:#a6a6a6;font-weight:bold;transform:scaleX(0.788);letter-spacing:0.4px;">Hold</span>
<div style="left:893.3px;top:451.6px;width:20.5px;height:15.8px;background:linear-gradient(#3a3b3c,#303132);border:1.6px solid #131314;border-radius:4.5px;box-shadow:inset 0 1px 0 rgba(255,255,255,.06);"></div>
<span class="t" style="left:941.00px;top:361.90px;font-size:11.5px;line-height:15px;color:#b8b8b8;font-weight:bold;transform:scaleX(0.760);letter-spacing:0.4px;">Segments</span>
<div style="left:944.0px;top:378.2px;width:41.4px;height:14.8px;border-radius:4.5px;border:1.6px solid #131314;background:linear-gradient(#3d3e3f,#2b2c2d);box-shadow:inset 0 1px 0 rgba(255,255,255,.08);"></div>
<span class="t" style="left:956.60px;top:378.70px;font-size:10.5px;line-height:14px;color:#e2e2e2;font-weight:bold;transform:scaleX(0.787);letter-spacing:0.4px;">ATT</span>
<div style="left:941.8px;top:399.4px;width:46.0px;height:30.4px;background:#050505;border-radius:1.5px;"></div>
<div style="left:945.8px;top:401.8px;width:26.2px;height:24.8px;background:#242526;"></div>
<svg style="left:946px;top:401.8px" width="25.4" height="24.8"><path d="M1.6 23.6L24 1.4" stroke="#e8e8e8" stroke-width="1.3"/></svg>
<svg style="left:975.8px;top:404px" width="7.6" height="3.6"><polygon points="0,0 7.6,0 3.8,3.6" fill="#d0d0d0"/></svg>
<span class="t" style="left:976.14px;top:413.70px;font-size:11px;line-height:15px;color:#f0f0f0;font-weight:normal;">1</span>
</body></html>
